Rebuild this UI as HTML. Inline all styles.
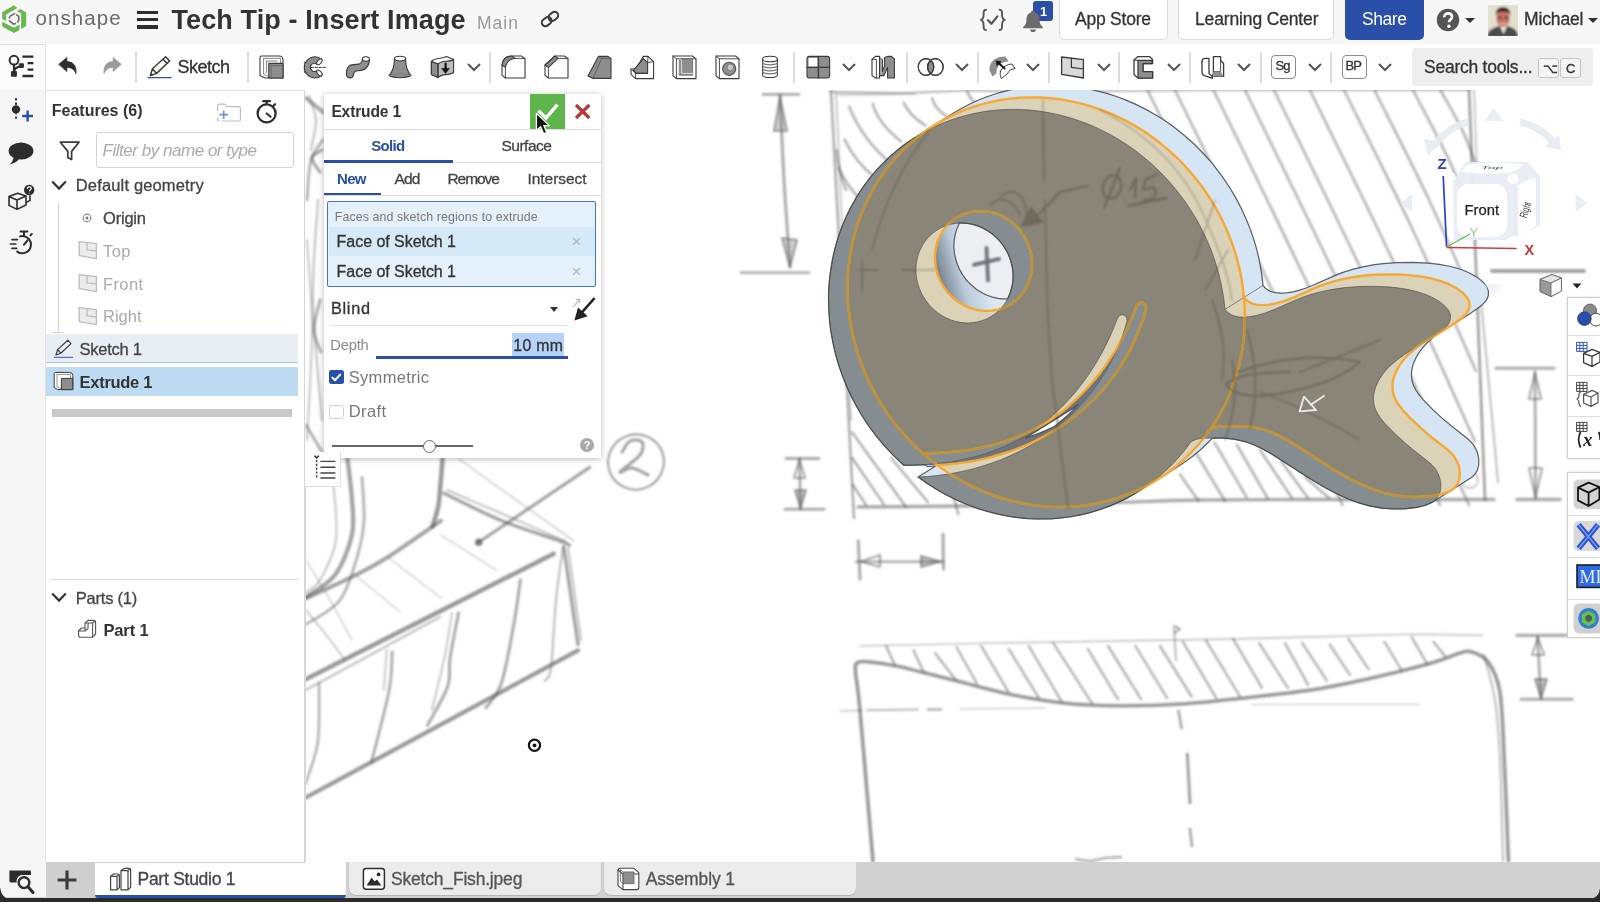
<!DOCTYPE html>
<html lang="en">
<head>
<meta charset="utf-8">
<title>Tech Tip - Insert Image</title>
<style>
*{box-sizing:border-box;margin:0;padding:0}
html,body{width:1600px;height:902px;overflow:hidden;background:#fff}
body{font-family:"Liberation Sans",sans-serif;color:#333;position:relative}
.abs{position:absolute}
.t{position:absolute;white-space:nowrap;line-height:1}
#topbar{left:0;top:0;width:1600px;height:44px;background:#f7f7f7}
#leftbar{left:0;top:44px;width:46px;height:818px;background:#f5f5f5;border-right:1px solid #e2e2e2}
#toolbar{left:46px;top:44px;width:1554px;height:46px;background:#fff}
#fpanel{left:46px;top:90px;width:259px;height:772px;background:#fff;border-right:1px solid #d6d6d6;border-top:1px solid #e4e4e4}
#canvas{left:305px;top:90px;width:1295px;height:772px;background:#fff;overflow:hidden}
#tabbar{left:0;top:862px;width:1600px;height:37px;background:#d1d1d1}
#bottomline{left:0;top:898.4px;width:1600px;height:3.6px;background:#2b2b2b}
.btn{position:absolute;top:0;height:40px;border:1px solid #d9d9d9;border-top:none;border-radius:0 0 5px 5px;background:#fff}
.sep{position:absolute;top:52px;width:2px;height:31px;background:#dcdcdc}
</style>
</head>
<body>
<!-- TOP BAR -->
<div id="topbar" class="abs"></div>
<!-- TOOLBAR -->
<div id="toolbar" class="abs"></div>
<!-- LEFT BAR -->
<div id="leftbar" class="abs"></div>
<!-- CANVAS -->
<div id="canvas" class="abs">
<svg width="1295" height="772" viewBox="305 90 1295 772" style="position:absolute;left:0;top:0">
<defs><filter id="pb" x="-5%" y="-5%" width="110%" height="110%"><feGaussianBlur stdDeviation="0.85"/></filter><filter id="pb2" x="-5%" y="-5%" width="110%" height="110%"><feGaussianBlur stdDeviation="1.1"/></filter></defs>
<g fill="none" stroke-linecap="round" stroke-linejoin="round" filter="url(#pb)"><path d="M831.0,91.0 L854.0,518.0" stroke="#505050" stroke-width="2.52"  stroke-opacity="0.48" />
<path d="M836.0,93.0 L851.0,420.0" stroke="#505050" stroke-width="1.82"  stroke-opacity="0.34" />
<path d="M830.0,92.0 C841.7,92.2 876.7,93.2 900.0,93.0 C923.3,92.8 946.7,90.7 970.0,90.5 C993.3,90.3 1001.7,92.1 1040.0,92.0 C1078.3,91.9 1128.3,90.3 1200.0,90.0 C1271.7,89.7 1425.0,90.0 1470.0,90.0" stroke="#505050" stroke-width="2.24"  stroke-opacity="0.44" />
<path d="M838.0,95.0 L915.0,94.0" stroke="#505050" stroke-width="1.68"  stroke-opacity="0.34" />
<path d="M858.0,507.0 C875.0,506.8 919.7,506.7 960.0,506.0 C1000.3,505.3 1060.0,504.0 1100.0,503.0 C1140.0,502.0 1158.3,500.6 1200.0,500.0 C1241.7,499.4 1301.0,499.6 1350.0,499.5 C1399.0,499.4 1470.0,499.5 1494.0,499.5" stroke="#505050" stroke-width="3.36"  stroke-opacity="0.48" />
<path d="M1469.0,88.0 L1485.0,500.0" stroke="#505050" stroke-width="2.80"  stroke-opacity="0.53" />
<path d="M1481.0,300.0 L1498.0,482.0" stroke="#505050" stroke-width="1.96"  stroke-opacity="0.39" />
<path d="M1474.0,88.0 L1478.0,200.0" stroke="#505050" stroke-width="1.82"  stroke-opacity="0.34" />
<path d="M872.8,103.8 Q877.5,122.8 901.0,141.5" stroke="#505050" stroke-width="2.52"  stroke-opacity="0.44" />
<path d="M903.8,102.9 Q909.9,116.0 925.5,125.5" stroke="#505050" stroke-width="2.52"  stroke-opacity="0.44" />
<path d="M932.1,98.2 Q934.4,108.0 946.2,116.1" stroke="#505050" stroke-width="2.52"  stroke-opacity="0.44" />
<path d="M967.0,90.7 Q969.7,99.2 976.4,103.8" stroke="#505050" stroke-width="2.52"  stroke-opacity="0.44" />
<path d="M849.2,106.7 Q862.5,139.5 889.7,162.3" stroke="#505050" stroke-width="2.52"  stroke-opacity="0.44" />
<path d="M844.5,139.6 Q855.9,162.4 874.6,177.3" stroke="#505050" stroke-width="2.52"  stroke-opacity="0.44" />
<path d="M838.8,167.9 Q847.4,186.9 859.6,198.0" stroke="#505050" stroke-width="2.52"  stroke-opacity="0.44" />
<path d="M836.5,150.0 Q838.8,174.0 846.0,190.0" stroke="#505050" stroke-width="2.52"  stroke-opacity="0.44" />
<path d="M1147.5,90.0 C1164.3,124.6 1215.5,228.3 1248.0,297.5 C1280.5,366.7 1326.8,470.4 1342.5,505.0" stroke="#505050" stroke-width="2.66"  stroke-opacity="0.41" />
<path d="M1175.0,90.0 C1191.8,124.6 1243.0,228.3 1275.5,297.5 C1308.0,366.7 1354.3,470.4 1370.0,505.0" stroke="#505050" stroke-width="2.66"  stroke-opacity="0.41" />
<path d="M1213.5,90.0 C1230.3,124.6 1281.5,228.3 1314.0,297.5 C1346.5,366.7 1392.8,470.4 1408.5,505.0" stroke="#505050" stroke-width="2.66"  stroke-opacity="0.41" />
<path d="M1245.0,90.0 C1261.8,124.6 1313.0,228.3 1345.5,297.5 C1378.0,366.7 1424.3,470.4 1440.0,505.0" stroke="#505050" stroke-width="2.66"  stroke-opacity="0.41" />
<path d="M1274.0,90.0 C1290.8,124.6 1342.0,228.3 1374.5,297.5 C1407.0,366.7 1453.3,470.4 1469.0,505.0" stroke="#505050" stroke-width="2.66"  stroke-opacity="0.41" />
<path d="M1309.8,90.0 C1324.1,119.3 1367.8,207.1 1395.3,265.6 C1422.9,324.2 1461.6,412.0 1474.9,441.3" stroke="#505050" stroke-width="2.66"  stroke-opacity="0.41" />
<path d="M1344.0,90.0 C1355.5,113.4 1391.0,183.6 1413.0,230.3 C1434.9,277.1 1465.4,347.3 1475.9,370.7" stroke="#505050" stroke-width="2.66"  stroke-opacity="0.41" />
<path d="M1374.4,90.0 C1383.4,108.2 1411.5,162.6 1428.6,199.0 C1445.7,235.3 1468.8,289.8 1476.8,307.9" stroke="#505050" stroke-width="2.66"  stroke-opacity="0.41" />
<path d="M1413.0,90.0 C1418.9,101.5 1437.7,136.1 1448.5,159.1 C1459.3,182.2 1473.1,216.8 1478.0,228.3" stroke="#505050" stroke-width="2.66"  stroke-opacity="0.41" />
<path d="M1440.4,90.0 C1444.1,96.8 1456.2,117.2 1462.6,130.9 C1469.0,144.5 1476.1,164.9 1478.8,171.7" stroke="#505050" stroke-width="2.66"  stroke-opacity="0.41" />
<path d="M852.2,432.4 L905.9,506.8" stroke="#505050" stroke-width="2.52"  stroke-opacity="0.44" />
<path d="M852.2,458.0 L883.9,504.4" stroke="#505050" stroke-width="2.52"  stroke-opacity="0.44" />
<path d="M891.2,458.0 L927.8,502.0" stroke="#505050" stroke-width="2.52"  stroke-opacity="0.44" />
<path d="M940.0,445.9 L958.3,514.1" stroke="#505050" stroke-width="2.52"  stroke-opacity="0.44" />
<path d="M853.0,485.0 L866.0,505.0" stroke="#505050" stroke-width="2.52"  stroke-opacity="0.44" />
<path d="M763.0,94.3 L799.0,94.3" stroke="#505050" stroke-width="2.80"  stroke-opacity="0.48" />
<path d="M780.0,95.0 C780.7,109.2 782.3,151.3 784.0,180.0 C785.7,208.7 789.0,252.5 790.0,267.0" stroke="#505050" stroke-width="3.08"  stroke-opacity="0.48" />
<path d="M741.0,272.7 L809.0,272.7" stroke="#505050" stroke-width="2.80"  stroke-opacity="0.44" />
<path d="M780,97 L774,131 L787,131Z" stroke="#505050" stroke-width="2.24"  stroke-opacity="0.48" fill="#777" fill-opacity="0.35"/>
<path d="M790,267 L782,238 L797,240Z" stroke="#505050" stroke-width="2.24"  stroke-opacity="0.48" fill="#777" fill-opacity="0.35"/>
<path d="M786.0,458.5 L819.0,458.5" stroke="#505050" stroke-width="3.08"  stroke-opacity="0.48" />
<path d="M785.0,509.3 L824.0,509.3" stroke="#505050" stroke-width="3.08"  stroke-opacity="0.48" />
<path d="M799.5,459.0 L800.5,509.0" stroke="#505050" stroke-width="2.80"  stroke-opacity="0.48" />
<path d="M799.5,460 L794,478 L805,478Z" stroke="#505050" stroke-width="2.24"  stroke-opacity="0.48" />
<path d="M800.5,508 L795,490 L806,490Z" stroke="#505050" stroke-width="2.24"  stroke-opacity="0.48" fill="#666" fill-opacity="0.4"/>
<path d="M858.3,541.0 L860.0,579.0" stroke="#505050" stroke-width="3.08"  stroke-opacity="0.48" />
<path d="M943.0,534.0 L943.5,569.0" stroke="#505050" stroke-width="3.08"  stroke-opacity="0.48" />
<path d="M856.0,561.7 L943.0,561.7" stroke="#505050" stroke-width="2.52"  stroke-opacity="0.48" />
<path d="M861,561.5 L880,555 L880,567Z" stroke="#505050" stroke-width="2.24"  stroke-opacity="0.48" />
<path d="M941,561.5 L921,556 L921,567Z" stroke="#505050" stroke-width="2.24"  stroke-opacity="0.48" fill="#666" fill-opacity="0.4"/>
<path d="M1492.0,271.0 L1584.0,271.0" stroke="#505050" stroke-width="4.20"  stroke-opacity="0.53" />
<path d="M1496.0,368.2 L1554.0,368.2" stroke="#505050" stroke-width="3.08"  stroke-opacity="0.48" />
<path d="M1517.0,499.5 L1560.0,499.5" stroke="#505050" stroke-width="3.64"  stroke-opacity="0.48" />
<path d="M1535.0,372.0 L1535.5,498.0" stroke="#505050" stroke-width="2.80"  stroke-opacity="0.48" />
<path d="M1535,373 L1529,399 L1541,399Z" stroke="#505050" stroke-width="2.24"  stroke-opacity="0.48" />
<path d="M1535.5,497 L1529,468 L1542,468Z" stroke="#505050" stroke-width="2.24"  stroke-opacity="0.48" />
<path d="M1517.0,635.4 L1566.0,635.4" stroke="#505050" stroke-width="3.08"  stroke-opacity="0.48" />
<path d="M1521.0,699.3 L1572.0,699.3" stroke="#505050" stroke-width="3.08"  stroke-opacity="0.48" />
<path d="M1537.5,637.0 L1541.0,698.0" stroke="#505050" stroke-width="2.80"  stroke-opacity="0.48" />
<path d="M1538,638 L1532,655 L1544,655Z" stroke="#505050" stroke-width="2.24"  stroke-opacity="0.48" />
<path d="M1541,698 L1535,679 L1547,679Z" stroke="#505050" stroke-width="2.24"  stroke-opacity="0.48" fill="#666" fill-opacity="0.4"/>
<circle cx="1470" cy="480" r="8" stroke="#4a4a4a" stroke-width="1.4" stroke-opacity="0.4"/>
<path d="M1180.0,474.5 L1198.6,501.0" stroke="#505050" stroke-width="2.66"  stroke-opacity="0.41" />
<path d="M1196.0,453.0 L1225.0,501.0" stroke="#505050" stroke-width="2.66"  stroke-opacity="0.41" />
<path d="M1214.6,442.6 L1246.5,497.0" stroke="#505050" stroke-width="2.66"  stroke-opacity="0.41" />
<path d="M1237.0,445.0 L1267.8,498.5" stroke="#505050" stroke-width="2.66"  stroke-opacity="0.41" />
<path d="M1260.0,450.0 L1292.0,498.0" stroke="#505050" stroke-width="2.66"  stroke-opacity="0.41" />
<path d="M1281.0,461.0 L1308.0,498.0" stroke="#505050" stroke-width="2.66"  stroke-opacity="0.41" />
<path d="M1305.0,477.0 L1329.0,498.0" stroke="#505050" stroke-width="2.66"  stroke-opacity="0.41" />
<path d="M873.0,861.0 C871.8,847.5 868.3,806.8 866.0,780.0 C863.7,753.2 860.8,718.0 859.0,700.0 C857.2,682.0 855.8,678.2 855.5,672.0 C855.2,665.8 855.1,664.2 857.5,662.5 C859.9,660.8 863.3,661.4 870.0,662.0 C876.7,662.6 883.4,663.1 897.6,666.2 C911.8,669.3 936.1,675.8 955.3,680.6 C974.5,685.4 993.8,691.1 1013.0,695.0 C1032.2,698.9 1051.3,701.9 1070.5,703.7 C1089.7,705.5 1108.8,705.7 1128.0,705.7 C1147.2,705.7 1164.2,705.2 1185.8,703.7 C1207.4,702.2 1236.0,698.9 1257.6,696.5 C1279.2,694.1 1296.1,692.4 1315.3,689.3 C1334.5,686.2 1353.8,682.0 1373.0,677.7 C1392.2,673.4 1416.1,667.4 1430.5,663.3 C1444.9,659.2 1452.7,655.1 1459.4,653.2 C1466.2,651.3 1466.2,650.3 1471.0,651.8 C1475.8,653.2 1483.2,655.4 1488.0,661.9 C1492.8,668.4 1497.0,675.4 1499.7,690.7 C1502.4,706.1 1502.5,725.6 1504.0,754.0 C1505.5,782.4 1507.7,843.2 1508.4,861.0" stroke="#505050" stroke-width="3.64"  stroke-opacity="0.58" />
<path d="M1484.0,655.0 C1485.8,662.5 1492.3,682.5 1495.0,700.0 C1497.7,717.5 1498.7,733.2 1500.0,760.0 C1501.3,786.8 1502.5,844.2 1503.0,861.0" stroke="#505050" stroke-width="1.96"  stroke-opacity="0.39" />
<path d="M860.0,646.0 C883.3,645.5 936.7,644.2 1000.0,643.0 C1063.3,641.8 1173.0,640.2 1240.0,638.8 C1307.0,637.4 1361.3,635.1 1401.7,634.5 C1442.1,633.9 1469.0,635.2 1482.4,635.4" stroke="#505050" stroke-width="1.68"  stroke-opacity="0.33" />
<path d="M886.1,646.0 L894.8,664.8" stroke="#505050" stroke-width="2.38"  stroke-opacity="0.44" />
<path d="M913.5,650.3 L923.6,672.0" stroke="#505050" stroke-width="2.38"  stroke-opacity="0.44" />
<path d="M935.1,653.2 L955.3,679.2" stroke="#505050" stroke-width="2.38"  stroke-opacity="0.44" />
<path d="M956.7,647.5 L976.9,683.5" stroke="#505050" stroke-width="2.38"  stroke-opacity="0.44" />
<path d="M981.2,646.0 L1008.6,692.1" stroke="#505050" stroke-width="2.38"  stroke-opacity="0.44" />
<path d="M1008.6,648.9 L1038.8,697.9" stroke="#505050" stroke-width="2.38"  stroke-opacity="0.44" />
<path d="M1028.8,646.0 L1061.9,702.2" stroke="#505050" stroke-width="2.38"  stroke-opacity="0.44" />
<path d="M1053.3,643.1 L1092.2,703.7" stroke="#505050" stroke-width="2.38"  stroke-opacity="0.44" />
<path d="M1087.8,648.9 L1118.1,699.3" stroke="#505050" stroke-width="2.38"  stroke-opacity="0.44" />
<path d="M1108.0,646.0 L1141.2,699.3" stroke="#505050" stroke-width="2.38"  stroke-opacity="0.44" />
<path d="M1135.4,646.0 L1167.1,697.9" stroke="#505050" stroke-width="2.38"  stroke-opacity="0.44" />
<path d="M1159.9,646.0 L1191.6,696.5" stroke="#505050" stroke-width="2.38"  stroke-opacity="0.44" />
<path d="M1182.9,641.7 L1216.1,697.9" stroke="#505050" stroke-width="2.38"  stroke-opacity="0.44" />
<path d="M1206.0,640.3 L1240.0,696.5" stroke="#505050" stroke-width="2.38"  stroke-opacity="0.44" />
<path d="M1233.1,638.8 L1262.0,687.8" stroke="#505050" stroke-width="2.38"  stroke-opacity="0.44" />
<path d="M1259.1,643.1 L1287.9,687.8" stroke="#505050" stroke-width="2.38"  stroke-opacity="0.44" />
<path d="M1285.0,643.1 L1308.1,684.9" stroke="#505050" stroke-width="2.38"  stroke-opacity="0.44" />
<path d="M1302.3,643.1 L1326.8,680.6" stroke="#505050" stroke-width="2.38"  stroke-opacity="0.44" />
<path d="M1329.7,644.6 L1349.9,674.8" stroke="#505050" stroke-width="2.38"  stroke-opacity="0.44" />
<path d="M1348.4,638.8 L1368.6,669.1" stroke="#505050" stroke-width="2.38"  stroke-opacity="0.44" />
<path d="M1384.4,641.7 L1401.7,670.5" stroke="#505050" stroke-width="2.38"  stroke-opacity="0.44" />
<path d="M1411.8,637.4 L1427.7,664.8" stroke="#505050" stroke-width="2.38"  stroke-opacity="0.44" />
<path d="M1433.4,641.7 L1445.0,656.1" stroke="#505050" stroke-width="2.38"  stroke-opacity="0.44" />
<path d="M1174.0,628.0 L1176.0,660.0" stroke="#505050" stroke-width="1.96"  stroke-opacity="0.39" />
<path d="M1174,626 L1180,629 L1174.5,633" stroke="#505050" stroke-width="1.96"  stroke-opacity="0.48" />
<path d="M1178.6,711.0 L1181.5,728.0" stroke="#505050" stroke-width="2.80"  stroke-opacity="0.48" />
<path d="M1187.3,754.0 L1190.0,803.0" stroke="#505050" stroke-width="3.08"  stroke-opacity="0.53" />
<path d="M1190.0,829.0 L1192.0,846.0" stroke="#505050" stroke-width="2.80"  stroke-opacity="0.48" />
<path d="M840.0,711.0 L862.0,710.5" stroke="#505050" stroke-width="1.68"  stroke-opacity="0.34" />
<path d="M867.0,710.3 L918.0,709.5" stroke="#505050" stroke-width="2.10"  stroke-opacity="0.39" />
<path d="M928.0,709.5 L941.0,709.5" stroke="#505050" stroke-width="2.52"  stroke-opacity="0.44" />
<path d="M960.0,709.0 L1045.0,708.0" stroke="#505050" stroke-width="1.40"  stroke-opacity="0.26" />
<path d="M1252.0,704.5 L1419.0,704.5" stroke="#505050" stroke-width="1.40"  stroke-opacity="0.26" />
<path d="M1076.0,859.0 C1078.3,859.3 1085.2,861.2 1090.0,861.0 C1094.8,860.8 1099.8,858.7 1105.0,858.0 C1110.2,857.3 1118.3,857.2 1121.0,857.0" stroke="#505050" stroke-width="2.52"  stroke-opacity="0.44" />
<path d="M442.6,458.7 C442.2,463.9 440.7,482.1 440.0,490.0 C439.3,497.9 439.5,500.2 438.3,506.3 C437.1,512.4 433.6,523.1 432.6,526.5" stroke="#505050" stroke-width="4.48"  stroke-opacity="0.58" />
<path d="M441.0,520.7 C431.9,526.9 400.9,548.9 386.5,558.0 C372.1,567.1 368.2,568.6 354.8,575.4 C341.4,582.1 314.0,594.6 305.8,598.5" stroke="#505050" stroke-width="3.92"  stroke-opacity="0.53" />
<path d="M444.0,493.3 C453.6,497.9 482.5,512.8 501.7,520.7 C520.9,528.6 548.1,536.8 559.4,540.9 C570.7,545.0 567.8,544.5 569.5,545.2" stroke="#505050" stroke-width="3.36"  stroke-opacity="0.53" />
<path d="M447.0,490.0 C456.7,494.2 485.3,506.5 505.0,515.0 C524.7,523.5 555.0,536.7 565.0,541.0" stroke="#505050" stroke-width="1.96"  stroke-opacity="0.34" />
<path d="M305.8,679.2 L553.6,553.8" stroke="#505050" stroke-width="4.48"  stroke-opacity="0.58" />
<path d="M305.8,690.0 L440.0,617.0" stroke="#505050" stroke-width="2.24"  stroke-opacity="0.34" />
<path d="M563.7,546.6 L578.0,644.6" stroke="#505050" stroke-width="3.36"  stroke-opacity="0.53" />
<path d="M568.0,548.0 L581.0,640.0" stroke="#505050" stroke-width="1.96"  stroke-opacity="0.39" />
<path d="M578.0,650.4 L305.0,798.0" stroke="#505050" stroke-width="4.20"  stroke-opacity="0.58" />
<path d="M520.5,579.8 C519.3,587.7 516.5,610.0 513.3,627.3 C510.1,644.5 505.9,669.9 501.4,683.3 C496.8,696.7 488.6,703.5 486.0,707.6" stroke="#505050" stroke-width="3.08"  stroke-opacity="0.48" />
<path d="M458.5,613.0 C457.1,620.7 451.7,646.8 449.9,659.0 C448.1,671.2 451.6,674.9 447.9,686.0 C444.2,697.1 430.9,718.8 427.5,725.4" stroke="#505050" stroke-width="3.08"  stroke-opacity="0.48" />
<path d="M452.0,613.0 C450.8,620.0 448.3,638.8 445.0,655.0 C441.7,671.2 434.2,700.8 432.0,710.0" stroke="#505050" stroke-width="1.82"  stroke-opacity="0.34" />
<path d="M392.2,651.8 C391.7,658.3 392.5,672.6 389.0,691.0 C385.5,709.4 374.3,750.5 371.4,762.4" stroke="#505050" stroke-width="2.80"  stroke-opacity="0.48" />
<path d="M386.7,650.0 L384.0,690.0" stroke="#505050" stroke-width="1.82"  stroke-opacity="0.34" />
<path d="M319.0,683.0 C318.8,692.8 320.1,725.0 317.8,742.0 C315.5,759.0 307.1,777.8 305.0,785.0" stroke="#505050" stroke-width="2.52"  stroke-opacity="0.44" />
<path d="M563.0,548.0 C561.8,556.7 558.0,580.0 556.0,600.0 C554.0,620.0 552.9,654.5 551.0,668.0 C549.1,681.5 545.8,678.7 544.7,680.8" stroke="#505050" stroke-width="2.10"  stroke-opacity="0.39" />
<path d="M478.7,542.3 L589.6,467.4" stroke="#505050" stroke-width="3.08"  stroke-opacity="0.53" />
<circle cx="478.7" cy="542.3" r="3.8" fill="#555" fill-opacity="0.7" stroke="none"/>
<path d="M458.5,458.7 L573.8,540.9" stroke="#505050" stroke-width="1.40"  stroke-opacity="0.30" />
<path d="M441.0,535.0 L496.0,570.0" stroke="#505050" stroke-width="1.40"  stroke-opacity="0.30" />
<path d="M389.0,558.0 L441.0,598.0" stroke="#505050" stroke-width="1.40"  stroke-opacity="0.27" />
<path d="M355.0,575.0 L400.0,612.0" stroke="#505050" stroke-width="1.40"  stroke-opacity="0.26" />
<path d="M347.5,458.7 C348.2,465.6 351.3,487.3 352.0,500.0 C352.7,512.7 354.7,522.5 351.9,535.0 C349.1,547.5 342.7,564.7 335.0,575.0 C327.3,585.3 310.7,593.3 305.8,597.0" stroke="#505050" stroke-width="4.20"  stroke-opacity="0.53" />
<path d="M362.0,477.5 C362.3,484.6 364.7,507.0 364.0,520.0 C363.3,533.0 361.6,542.0 357.6,555.3 C353.6,568.6 348.6,588.5 340.0,600.0 C331.4,611.5 311.5,620.3 305.8,624.4" stroke="#505050" stroke-width="2.80"  stroke-opacity="0.44" />
<path d="M333.0,480.0 C333.5,490.0 338.2,523.3 336.0,540.0 C333.8,556.7 325.0,571.3 320.0,580.0 C315.0,588.7 308.3,590.0 306.0,592.0" stroke="#505050" stroke-width="1.96"  stroke-opacity="0.34" />
<path d="M306.0,610.0 C310.0,615.0 323.5,631.7 330.0,640.0 C336.5,648.3 342.5,656.7 345.0,660.0" stroke="#505050" stroke-width="1.68"  stroke-opacity="0.34" />
<path d="M306.0,560.0 C310.0,566.7 322.3,586.7 330.0,600.0 C337.7,613.3 348.3,633.3 352.0,640.0" stroke="#505050" stroke-width="1.40"  stroke-opacity="0.30" />
<ellipse cx="636" cy="462" rx="28" ry="27.5" stroke="#4a4a4a" stroke-width="2" stroke-opacity="0.55" transform="rotate(-20 636 462)"/>
<path d="M622.0,452.0 C623.3,450.2 626.7,442.7 630.0,441.0 C633.3,439.3 640.3,439.7 642.0,442.0 C643.7,444.3 643.7,450.0 640.0,455.0 C636.3,460.0 621.3,469.8 620.0,472.0 C618.7,474.2 627.3,467.5 632.0,468.0 C636.7,468.5 645.3,473.8 648.0,475.0" stroke="#505050" stroke-width="3.08"  stroke-opacity="0.53" />
<path d="M306.0,98.0 L323.0,112.0" stroke="#505050" stroke-width="4.20"  stroke-opacity="0.48" />
<path d="M323.0,140.0 C321.0,143.3 313.7,150.0 311.0,160.0 C308.3,170.0 307.7,193.3 307.0,200.0" stroke="#505050" stroke-width="2.80"  stroke-opacity="0.44" />
<path d="M318.0,200.0 C317.2,216.7 312.3,263.3 313.0,300.0 C313.7,336.7 320.5,400.0 322.0,420.0" stroke="#505050" stroke-width="2.24"  stroke-opacity="0.34" />
<path d="M307.0,240.0 C307.8,255.0 312.0,296.7 312.0,330.0 C312.0,363.3 307.8,421.7 307.0,440.0" stroke="#505050" stroke-width="1.96"  stroke-opacity="0.34" />
<path d="M322.0,150.0 C320.3,151.3 312.3,154.3 312.0,158.0 C311.7,161.7 318.7,169.7 320.0,172.0" stroke="#505050" stroke-width="3.36"  stroke-opacity="0.48" />
<path d="M320.0,300.0 C319.0,305.0 313.8,321.3 314.0,330.0 C314.2,338.7 319.8,348.3 321.0,352.0" stroke="#505050" stroke-width="3.08"  stroke-opacity="0.44" />
<path d="M309.0,96.0 C310.2,100.0 315.7,111.0 316.0,120.0 C316.3,129.0 311.8,145.0 311.0,150.0" stroke="#505050" stroke-width="2.24"  stroke-opacity="0.34" />
<path d="M306.0,425.0 L322.0,452.0" stroke="#505050" stroke-width="3.08"  stroke-opacity="0.44" />
<path d="M1043.0,100.0 C1043.5,133.3 1041.8,232.0 1046.0,300.0 C1050.2,368.0 1064.3,473.3 1068.0,508.0" stroke="#505050" stroke-width="1.68"  stroke-opacity="0.48" />
<path d="M855.0,270.0 L875.0,270.0" stroke="#505050" stroke-width="1.96"  stroke-opacity="0.48" />
<path d="M905.0,270.0 L935.0,270.0" stroke="#505050" stroke-width="1.96"  stroke-opacity="0.48" />
<path d="M986.5,247.5 L988.0,280.7" stroke="#505050" stroke-width="3.64"  stroke-opacity="0.73" />
<path d="M973.5,264.8 L999.4,259.0" stroke="#505050" stroke-width="3.64"  stroke-opacity="0.73" />
<circle cx="1047" cy="303" r="1.8" fill="#333" fill-opacity="0.7" stroke="none"/></g>
<defs><linearGradient id="hg" gradientUnits="userSpaceOnUse" x1="936" y1="262" x2="978" y2="250"><stop offset="0" stop-color="#7b8690"/><stop offset="0.45" stop-color="#b9c9d8"/><stop offset="1" stop-color="#dbe8f3"/></linearGradient><clipPath id="clipNF"><path d="M0,0H1600V902H0Z M1225.0,309.4 1223.4,295.9 1221.4,285.2 1219.0,274.7 1216.8,266.8 1213.4,256.4 1210.6,248.8 1207.4,241.2 1202.8,231.3 1197.7,221.6 1193.5,214.5 1187.6,205.3 1182.9,198.5 1176.2,189.9 1170.9,183.6 1163.6,175.5 1155.8,167.8 1149.8,162.3 1141.4,155.3 1134.9,150.3 1126.0,144.1 1116.9,138.4 1109.8,134.4 1100.3,129.5 1090.5,125.1 1080.6,121.3 1073.0,118.7 1062.8,115.8 1055.1,113.9 1044.8,112.0 1037.0,110.8 1029.2,110.0 1018.8,109.4 1011.0,109.4 1000.7,109.8 993.0,110.4 982.8,111.8 972.7,113.8 965.2,115.6 955.4,118.5 945.8,121.9 936.4,125.8 929.6,129.1 920.7,134.0 914.2,137.9 905.8,143.6 897.7,149.8 890.0,156.4 884.4,161.7 877.4,169.1 870.8,176.8 866.1,182.9 860.2,191.3 856.1,197.8 851.1,206.8 847.6,213.7 843.4,223.2 839.7,232.9 837.2,240.4 835.1,247.9 832.7,258.2 831.3,266.0 829.8,276.4 828.9,287.0 828.5,295.0 828.7,308.4 829.4,319.1 830.6,329.8 833.0,343.2 835.4,353.7 839.2,366.8 842.9,377.1 847.0,387.2 852.9,399.6 858.1,409.2 863.8,418.6 871.5,429.9 878.2,438.5 887.1,448.9 894.7,456.8 903.7,465.3 912.6,465.2 922.9,464.8 940.9,463.2 951.2,461.8 958.8,460.4 973.9,457.0 983.8,454.1 991.1,451.7 1005.4,446.0 1012.3,442.8 1019.1,439.3 1025.7,435.5 1032.1,431.4 1042.5,424.0 1048.4,419.3 1054.2,414.2 1065.2,403.5 1075.5,392.0 1081.9,383.9 1087.9,375.6 1093.6,367.0 1098.9,358.1 1102.7,351.4 1107.3,342.2 1112.7,330.5 1117.3,318.7 1119.5,315.5 1123.0,314.5 1126.5,317.0 1127.1,320.7 1126.4,323.3 1123.2,333.6 1118.5,346.1 1115.3,353.4 1110.6,362.9 1106.8,369.8 1101.3,378.7 1096.9,385.2 1092.2,391.5 1087.3,397.6 1080.5,405.4 1075.1,411.0 1067.6,418.2 1061.7,423.4 1053.7,429.9 1041.0,438.9 1034.4,443.1 1025.3,448.3 1018.4,451.9 1009.0,456.3 1001.7,459.4 991.9,463.1 984.5,465.5 974.4,468.5 966.8,470.4 956.5,472.6 948.7,474.0 938.3,475.4 927.8,476.5 918.1,477.1 926.1,482.8 932.9,487.2 939.8,491.4 946.9,495.3 954.1,498.9 961.4,502.2 971.3,506.2 978.9,508.9 991.6,512.6 999.3,514.5 1007.0,516.0 1014.8,517.2 1022.6,518.1 1030.4,518.7 1038.2,519.0 1051.2,518.8 1058.9,518.2 1066.6,517.3 1074.2,516.1 1081.7,514.6 1089.2,512.8 1096.5,510.7 1108.6,506.5 1120.3,501.5 1131.5,495.7 1142.4,489.1 1148.6,484.8 1154.7,480.2 1160.6,475.3 1168.1,468.5 1173.5,463.1 1180.4,455.5 1185.2,449.6 1191.2,441.5 1195.0,439.8 1198.5,438.9 1202.1,438.4 1207.8,438.1 1223.7,438.2 1233.6,439.1 1243.0,441.1 1248.4,442.8 1253.7,444.8 1262.2,448.8 1272.2,454.4 1309.7,478.5 1319.7,484.6 1329.8,490.3 1340.1,495.4 1348.8,499.3 1357.7,502.6 1366.8,505.2 1377.8,507.6 1387.3,508.7 1396.9,509.1 1406.9,508.6 1417.1,507.3 1425.0,505.5 1428.7,504.1 1432.0,502.4 1434.9,500.3 1436.1,499.1 1438.2,496.4 1439.7,493.1 1440.6,489.5 1440.8,485.6 1440.5,481.6 1439.7,477.7 1438.3,473.9 1436.5,470.4 1434.1,467.2 1430.0,463.0 1413.2,449.8 1404.6,442.6 1394.8,433.6 1385.1,423.7 1380.1,417.5 1378.0,414.2 1376.2,410.9 1374.8,407.5 1373.9,403.9 1373.4,398.4 1373.7,394.7 1374.5,390.9 1375.6,387.2 1378.0,381.8 1379.9,378.4 1383.2,373.6 1385.7,370.5 1389.7,366.3 1397.1,359.9 1404.8,354.3 1429.2,339.4 1437.3,334.0 1443.7,329.2 1446.6,326.4 1447.8,325.0 1448.8,323.4 1450.2,320.0 1450.5,316.4 1450.3,314.6 1449.8,312.9 1448.1,309.7 1444.2,305.4 1441.3,302.9 1438.1,300.6 1431.2,296.8 1423.9,293.8 1414.5,291.0 1405.2,289.0 1395.7,287.6 1384.4,286.7 1371.0,286.3 1357.5,286.6 1344.0,287.7 1330.7,289.7 1319.3,292.1 1310.0,294.7 1300.9,297.9 1293.7,300.9 1274.3,309.5 1265.3,312.9 1256.2,315.6 1248.7,316.8 1243.0,317.2 1239.2,317.0 1233.7,315.8 1230.4,314.2 1227.3,312.0ZM991.0,316.6 986.0,319.2 982.5,320.5 977.1,322.0 973.4,322.6 967.7,323.0 963.9,322.8 960.1,322.4 954.4,321.1 950.7,319.9 945.3,317.5 941.9,315.6 937.0,312.3 932.5,308.3 929.7,305.5 926.0,300.8 923.8,297.4 921.8,293.9 919.4,288.5 918.1,284.7 916.7,278.9 916.0,273.0 915.9,269.1 916.1,265.2 917.0,259.5 918.5,253.9 919.9,250.3 922.4,245.3 924.5,242.1 928.0,237.7 930.6,235.0 933.4,232.6 938.0,229.4 943.0,226.8 946.5,225.5 951.9,224.0 955.6,223.4 959.4,223.1 965.1,223.2 968.9,223.6 974.6,224.9 978.3,226.1 983.7,228.5 988.8,231.4 992.0,233.7 996.5,237.7 999.3,240.5 1003.0,245.2 1005.2,248.6 1008.1,253.9 1009.6,257.5 1010.9,261.3 1012.3,267.1 1013.0,273.0 1013.1,276.9 1012.9,280.8 1012.0,286.5 1010.5,292.1 1009.1,295.7 1006.6,300.7 1004.5,303.9 1001.0,308.3 998.4,311.0 995.6,313.4Z" clip-rule="evenodd"/></clipPath><clipPath id="clipF"><path d="M1225.0,309.4 1223.4,295.9 1221.4,285.2 1219.0,274.7 1216.8,266.8 1213.4,256.4 1210.6,248.8 1207.4,241.2 1202.8,231.3 1197.7,221.6 1193.5,214.5 1187.6,205.3 1182.9,198.5 1176.2,189.9 1170.9,183.6 1163.6,175.5 1155.8,167.8 1149.8,162.3 1141.4,155.3 1134.9,150.3 1126.0,144.1 1116.9,138.4 1109.8,134.4 1100.3,129.5 1090.5,125.1 1080.6,121.3 1073.0,118.7 1062.8,115.8 1055.1,113.9 1044.8,112.0 1037.0,110.8 1029.2,110.0 1018.8,109.4 1011.0,109.4 1000.7,109.8 993.0,110.4 982.8,111.8 972.7,113.8 965.2,115.6 955.4,118.5 945.8,121.9 936.4,125.8 929.6,129.1 920.7,134.0 914.2,137.9 905.8,143.6 897.7,149.8 890.0,156.4 884.4,161.7 877.4,169.1 870.8,176.8 866.1,182.9 860.2,191.3 856.1,197.8 851.1,206.8 847.6,213.7 843.4,223.2 839.7,232.9 837.2,240.4 835.1,247.9 832.7,258.2 831.3,266.0 829.8,276.4 828.9,287.0 828.5,295.0 828.7,308.4 829.4,319.1 830.6,329.8 833.0,343.2 835.4,353.7 839.2,366.8 842.9,377.1 847.0,387.2 852.9,399.6 858.1,409.2 863.8,418.6 871.5,429.9 878.2,438.5 887.1,448.9 894.7,456.8 903.7,465.3 912.6,465.2 922.9,464.8 940.9,463.2 951.2,461.8 958.8,460.4 973.9,457.0 983.8,454.1 991.1,451.7 1005.4,446.0 1012.3,442.8 1019.1,439.3 1025.7,435.5 1032.1,431.4 1042.5,424.0 1048.4,419.3 1054.2,414.2 1065.2,403.5 1075.5,392.0 1081.9,383.9 1087.9,375.6 1093.6,367.0 1098.9,358.1 1102.7,351.4 1107.3,342.2 1112.7,330.5 1117.3,318.7 1119.5,315.5 1123.0,314.5 1126.5,317.0 1127.1,320.7 1126.4,323.3 1123.2,333.6 1118.5,346.1 1115.3,353.4 1110.6,362.9 1106.8,369.8 1101.3,378.7 1096.9,385.2 1092.2,391.5 1087.3,397.6 1080.5,405.4 1075.1,411.0 1067.6,418.2 1061.7,423.4 1053.7,429.9 1041.0,438.9 1034.4,443.1 1025.3,448.3 1018.4,451.9 1009.0,456.3 1001.7,459.4 991.9,463.1 984.5,465.5 974.4,468.5 966.8,470.4 956.5,472.6 948.7,474.0 938.3,475.4 927.8,476.5 918.1,477.1 926.1,482.8 932.9,487.2 939.8,491.4 946.9,495.3 954.1,498.9 961.4,502.2 971.3,506.2 978.9,508.9 991.6,512.6 999.3,514.5 1007.0,516.0 1014.8,517.2 1022.6,518.1 1030.4,518.7 1038.2,519.0 1051.2,518.8 1058.9,518.2 1066.6,517.3 1074.2,516.1 1081.7,514.6 1089.2,512.8 1096.5,510.7 1108.6,506.5 1120.3,501.5 1131.5,495.7 1142.4,489.1 1148.6,484.8 1154.7,480.2 1160.6,475.3 1168.1,468.5 1173.5,463.1 1180.4,455.5 1185.2,449.6 1191.2,441.5 1195.0,439.8 1198.5,438.9 1202.1,438.4 1207.8,438.1 1223.7,438.2 1233.6,439.1 1243.0,441.1 1248.4,442.8 1253.7,444.8 1262.2,448.8 1272.2,454.4 1309.7,478.5 1319.7,484.6 1329.8,490.3 1340.1,495.4 1348.8,499.3 1357.7,502.6 1366.8,505.2 1377.8,507.6 1387.3,508.7 1396.9,509.1 1406.9,508.6 1417.1,507.3 1425.0,505.5 1428.7,504.1 1432.0,502.4 1434.9,500.3 1436.1,499.1 1438.2,496.4 1439.7,493.1 1440.6,489.5 1440.8,485.6 1440.5,481.6 1439.7,477.7 1438.3,473.9 1436.5,470.4 1434.1,467.2 1430.0,463.0 1413.2,449.8 1404.6,442.6 1394.8,433.6 1385.1,423.7 1380.1,417.5 1378.0,414.2 1376.2,410.9 1374.8,407.5 1373.9,403.9 1373.4,398.4 1373.7,394.7 1374.5,390.9 1375.6,387.2 1378.0,381.8 1379.9,378.4 1383.2,373.6 1385.7,370.5 1389.7,366.3 1397.1,359.9 1404.8,354.3 1429.2,339.4 1437.3,334.0 1443.7,329.2 1446.6,326.4 1447.8,325.0 1448.8,323.4 1450.2,320.0 1450.5,316.4 1450.3,314.6 1449.8,312.9 1448.1,309.7 1444.2,305.4 1441.3,302.9 1438.1,300.6 1431.2,296.8 1423.9,293.8 1414.5,291.0 1405.2,289.0 1395.7,287.6 1384.4,286.7 1371.0,286.3 1357.5,286.6 1344.0,287.7 1330.7,289.7 1319.3,292.1 1310.0,294.7 1300.9,297.9 1293.7,300.9 1274.3,309.5 1265.3,312.9 1256.2,315.6 1248.7,316.8 1243.0,317.2 1239.2,317.0 1233.7,315.8 1230.4,314.2 1227.3,312.0ZM991.0,316.6 986.0,319.2 982.5,320.5 977.1,322.0 973.4,322.6 967.7,323.0 963.9,322.8 960.1,322.4 954.4,321.1 950.7,319.9 945.3,317.5 941.9,315.6 937.0,312.3 932.5,308.3 929.7,305.5 926.0,300.8 923.8,297.4 921.8,293.9 919.4,288.5 918.1,284.7 916.7,278.9 916.0,273.0 915.9,269.1 916.1,265.2 917.0,259.5 918.5,253.9 919.9,250.3 922.4,245.3 924.5,242.1 928.0,237.7 930.6,235.0 933.4,232.6 938.0,229.4 943.0,226.8 946.5,225.5 951.9,224.0 955.6,223.4 959.4,223.1 965.1,223.2 968.9,223.6 974.6,224.9 978.3,226.1 983.7,228.5 988.8,231.4 992.0,233.7 996.5,237.7 999.3,240.5 1003.0,245.2 1005.2,248.6 1008.1,253.9 1009.6,257.5 1010.9,261.3 1012.3,267.1 1013.0,273.0 1013.1,276.9 1012.9,280.8 1012.0,286.5 1010.5,292.1 1009.1,295.7 1006.6,300.7 1004.5,303.9 1001.0,308.3 998.4,311.0 995.6,313.4Z" clip-rule="evenodd"/></clipPath></defs>
<g id="fish">
<path d="M1007.6,298.9 1010.5,292.1 1012.0,286.5 1012.9,280.8 1013.0,273.0 1012.3,267.1 1010.3,259.4 1008.1,253.9 1004.2,246.9 1000.6,242.0 996.5,237.7 992.0,233.7 985.4,229.4 978.3,226.1 972.7,224.4 967.0,223.4 963.2,223.1 959.4,223.1 956.5,229.9 955.0,235.5 954.3,239.3 954.0,243.1 954.0,249.0 954.7,254.9 956.7,262.6 959.8,269.9 962.8,275.1 966.4,280.0 971.9,285.7 976.6,289.4 983.3,293.5 990.6,296.5 994.3,297.6 998.1,298.4 1001.9,298.8Z" fill="#d9dee6" fill-opacity="0.5"/>
<path d="M924.6,131.8 933.2,125.9 914.2,137.9ZM1480.2,306.4 1484.6,302.4 1486.8,299.4 1488.2,296.0 1488.5,292.4 1487.8,288.9 1486.1,285.7 1483.6,282.7 1480.8,280.1 1476.1,276.6 1470.9,273.7 1465.5,271.2 1458.1,268.6 1450.7,266.5 1443.2,265.0 1435.6,263.8 1428.1,263.1 1412.8,262.4 1397.4,262.6 1383.9,263.5 1370.6,265.3 1357.3,268.1 1344.4,271.9 1333.5,276.1 1308.7,287.0 1301.5,289.5 1296.0,291.1 1290.5,292.3 1286.7,292.8 1282.9,293.1 1279.1,293.1 1273.5,292.3 1270.0,291.1 1268.4,290.2 1265.3,288.0 1263.0,285.4 1262.1,277.2 1260.9,269.2 1259.4,261.2 1257.7,253.3 1254.8,242.8 1252.3,235.0 1249.5,227.3 1246.5,219.7 1240.8,207.3 1232.9,192.8 1224.1,179.0 1215.9,168.0 1205.3,155.5 1193.8,143.8 1187.8,138.3 1181.5,133.0 1175.1,128.0 1168.5,123.2 1161.8,118.6 1154.9,114.4 1143.1,107.9 1135.9,104.4 1128.5,101.1 1121.1,98.2 1113.5,95.5 1100.8,91.8 1090.5,89.4 1080.2,87.5 1067.2,86.0 1056.8,85.4 1043.8,85.5 1033.5,86.2 1020.8,87.8 1010.7,89.8 998.3,92.9 986.2,97.0 976.8,100.8 967.6,105.1 958.7,110.0 954.3,112.6 933.2,125.9 944.1,119.5 955.4,113.8 967.2,109.0 979.3,104.9 991.7,101.8 1004.3,99.4 1017.1,98.0 1030.0,97.4 1043.0,97.7 1056.0,98.8 1069.0,100.9 1081.8,103.8 1094.5,107.5 1107.0,112.1 1119.3,117.5 1131.2,123.7 1142.8,130.6 1153.9,138.3 1164.6,146.7 1172.8,153.9 1182.6,163.5 1189.9,171.6 1198.6,182.2 1206.6,193.3 1213.9,204.8 1221.8,219.3 1227.5,231.7 1232.4,244.4 1236.6,257.4 1239.9,270.6 1242.4,283.9 1244.0,297.4 1246.3,300.0 1247.8,301.2 1249.4,302.2 1252.7,303.8 1258.2,305.0 1263.9,305.1 1271.5,304.3 1278.9,302.6 1284.3,300.9 1291.5,298.3 1312.7,288.9 1321.7,285.2 1332.7,281.6 1344.0,278.8 1355.4,276.7 1366.9,275.3 1378.4,274.6 1391.9,274.4 1405.3,274.8 1416.6,275.8 1426.0,277.3 1435.4,279.5 1444.7,282.5 1451.9,285.7 1458.7,289.7 1463.2,293.4 1467.1,297.7 1468.8,300.9 1469.5,304.4 1469.5,306.2 1468.6,309.7 1466.8,313.0 1465.6,314.4 1462.7,317.2 1456.3,322.0 1449.8,326.4 1470.4,313.3ZM1478.6,465.5 1478.8,459.7 1477.7,453.7 1475.4,448.1 1473.3,444.8 1470.8,441.8 1466.6,437.7 1451.2,425.8 1441.2,417.3 1432.8,409.6 1425.8,402.6 1420.5,396.6 1416.0,390.2 1413.4,385.2 1411.9,379.9 1411.4,376.2 1411.5,372.5 1412.1,368.8 1413.0,365.0 1414.3,361.4 1416.0,357.8 1420.0,351.1 1425.0,345.1 1432.1,338.4 1436.8,334.6 1449.8,326.4 1437.9,333.6 1430.8,338.4 1420.1,344.9 1411.6,351.6 1407.3,355.7 1404.7,358.5 1401.0,363.1 1398.9,366.4 1396.1,371.6 1394.6,375.2 1393.1,380.8 1392.5,384.5 1392.4,388.2 1392.9,391.9 1394.4,397.2 1397.0,402.2 1400.3,407.1 1405.4,413.1 1415.2,422.9 1425.0,431.8 1432.2,437.8 1449.0,451.0 1453.1,455.2 1455.5,458.4 1457.3,461.9 1459.2,467.7 1459.8,473.6 1459.6,477.5 1458.7,481.1 1457.2,484.4 1455.1,487.1 1453.9,488.3 1451.0,490.4 1470.0,478.4 1472.9,476.3 1475.2,473.8 1476.2,472.4 1477.7,469.1ZM1196.7,453.0 1204.3,446.2 1212.5,438.1 1203.6,438.3 1194.3,449.2 1189.0,454.7 1183.4,460.0 1177.7,465.0 1171.7,469.7 1165.6,474.2 1159.2,478.5 1182.5,463.7 1188.7,459.3ZM935.6,466.0 918.1,477.1 933.1,476.0 949.7,473.8 937.1,465.1 925.8,465.3 927.7,466.7ZM1159.2,478.5 1148.8,484.6 1140.2,490.5ZM1449.4,491.3 1444.0,493.5 1439.1,494.7 1438.2,496.4 1436.1,499.1 1434.9,500.3 1432.0,502.4 1451.0,490.4Z" fill="#d6e5f3" fill-rule="evenodd"/>
<path d="M949.7,473.8 964.2,471.0 976.9,467.8 989.5,463.9 1001.7,459.4 1013.7,454.2 1025.3,448.3 1036.6,441.7 1046.9,434.9 1035.1,441.1 1023.2,446.4 1010.9,451.1 995.9,455.8 983.2,459.0 967.7,462.0 952.1,464.0 937.1,465.1ZM1120.5,341.2 1124.0,331.1 1127.1,320.7 1126.5,317.0 1123.0,314.5 1119.5,315.5 1117.3,318.7 1113.6,328.2 1109.5,337.6 1105.1,346.8 1101.4,353.6 1096.3,362.6 1092.2,369.1 1086.4,377.7 1081.9,383.9 1072.1,395.9 1061.6,407.2 1050.4,417.6 1044.5,422.5 1038.1,427.3 1049.0,420.8 1055.3,416.6 1061.5,412.0 1067.4,407.3 1073.2,402.2 1084.2,391.5 1094.5,380.0 1103.9,367.8 1108.4,361.4 1114.0,352.8 1119.2,343.9ZM1203.6,438.3 1196.7,439.3 1193.3,440.5 1191.2,441.5 1186.8,447.6 1182.0,453.6 1177.0,459.3 1171.8,464.9 1166.3,470.2 1160.6,475.3 1154.7,480.2 1148.8,484.6 1157.1,479.8 1165.6,474.2 1173.7,468.2 1179.6,463.3 1185.3,458.2 1192.5,451.1 1197.7,445.4ZM924.6,131.8 934.1,126.9 945.8,121.9 957.9,117.7 970.2,114.3 982.8,111.8 993.0,110.4 1005.8,109.5 1018.8,109.4 1029.2,110.0 1042.2,111.5 1055.1,113.9 1067.9,117.2 1080.6,121.3 1093.0,126.2 1105.1,131.9 1116.9,138.4 1128.3,145.6 1139.3,153.6 1149.8,162.3 1157.8,169.7 1165.4,177.5 1174.5,187.7 1182.9,198.5 1189.1,207.5 1196.3,219.2 1202.8,231.3 1208.5,243.7 1213.4,256.4 1217.6,269.4 1220.9,282.6 1223.4,295.9 1225.0,309.4 1227.3,312.0 1228.8,313.2 1230.4,314.2 1233.7,315.8 1237.3,316.7 1243.0,317.2 1248.7,316.8 1256.2,315.6 1261.7,314.1 1268.9,311.7 1276.0,308.8 1299.1,298.6 1306.4,295.9 1315.6,293.1 1326.9,290.4 1338.3,288.4 1349.8,287.2 1363.3,286.4 1374.8,286.4 1388.2,287.0 1397.6,287.8 1407.0,289.3 1416.4,291.5 1423.9,293.8 1431.2,296.8 1438.1,300.6 1442.8,304.1 1446.9,308.2 1449.1,311.2 1449.8,312.9 1450.5,316.4 1450.5,318.2 1449.6,321.7 1447.8,325.0 1446.6,326.4 1443.7,329.2 1437.9,333.6 1451.4,325.3 1461.2,318.4 1465.6,314.4 1467.8,311.4 1468.6,309.7 1469.5,306.2 1469.3,302.6 1468.8,300.9 1467.1,297.7 1464.6,294.7 1460.3,290.9 1457.1,288.6 1451.9,285.7 1446.5,283.2 1441.0,281.2 1435.4,279.5 1427.9,277.7 1422.3,276.6 1414.7,275.6 1407.2,275.0 1397.6,274.5 1382.3,274.4 1366.9,275.3 1353.5,277.0 1340.2,279.7 1330.9,282.2 1323.5,284.6 1314.5,288.1 1289.7,299.0 1280.7,302.1 1273.4,303.9 1265.8,305.0 1260.1,305.1 1254.5,304.3 1251.0,303.1 1249.4,302.2 1246.3,300.0 1244.0,297.4 1243.1,289.2 1241.9,281.2 1240.4,273.2 1238.7,265.3 1235.8,254.8 1233.3,247.0 1230.5,239.3 1227.5,231.7 1221.8,219.3 1213.9,204.8 1205.1,191.0 1196.9,180.0 1186.3,167.5 1174.8,155.8 1168.8,150.3 1162.5,145.0 1156.1,140.0 1149.5,135.2 1142.8,130.6 1135.9,126.4 1124.1,119.9 1116.9,116.4 1109.5,113.1 1102.1,110.2 1094.5,107.5 1084.4,104.5 1074.1,101.9 1061.2,99.5 1050.8,98.3 1040.4,97.5 1030.0,97.4 1017.1,98.0 1006.8,99.1 994.2,101.2 984.2,103.6 974.4,106.5 964.8,109.9 953.1,114.9 944.1,119.5 933.2,125.9ZM1420.1,344.9 1408.0,352.3 1398.6,358.8 1391.1,365.0 1387.0,369.1 1384.4,372.0 1380.9,376.7 1378.9,380.1 1377.1,383.6 1375.6,387.2 1374.5,390.9 1373.7,394.7 1373.4,398.4 1373.6,402.1 1374.8,407.5 1377.0,412.6 1379.0,415.9 1381.3,419.1 1386.4,425.1 1394.8,433.6 1403.2,441.3 1413.2,449.8 1428.6,461.7 1432.8,465.8 1435.3,468.8 1438.3,473.9 1439.7,477.7 1440.5,481.6 1440.8,485.6 1440.6,489.5 1440.2,491.4 1439.1,494.7 1445.9,492.8 1451.0,490.4 1453.9,488.3 1455.1,487.1 1457.2,484.4 1458.0,482.8 1459.2,479.4 1459.6,477.5 1459.8,473.6 1459.2,467.7 1457.3,461.9 1454.3,456.8 1450.5,452.4 1446.0,448.5 1433.7,439.0 1423.6,430.6 1413.8,421.6 1404.1,411.7 1399.1,405.5 1396.0,400.6 1393.8,395.5 1392.6,390.1 1392.5,384.5 1393.5,378.9 1395.3,373.4 1397.0,369.8 1398.9,366.4 1402.2,361.6 1407.3,355.7 1413.1,350.4ZM947.4,225.2 943.0,226.8 938.0,229.4 933.4,232.6 930.6,235.0 928.0,237.7 924.5,242.1 922.4,245.3 919.9,250.3 918.5,253.9 917.0,259.5 916.1,265.2 915.9,269.1 916.0,273.0 916.7,278.9 918.1,284.7 919.4,288.5 921.8,293.9 923.8,297.4 927.2,302.4 931.1,306.9 933.9,309.7 938.6,313.4 943.6,316.6 947.1,318.4 950.7,319.9 956.3,321.6 962.0,322.6 965.8,322.9 971.5,322.8 975.2,322.3 978.9,321.6 984.3,319.9 989.4,317.5 992.6,315.6 997.0,312.2 1000.6,308.8 996.1,310.0 992.4,310.6 986.7,311.0 982.9,310.8 979.1,310.4 973.4,309.1 969.7,307.9 964.3,305.5 960.9,303.6 956.0,300.3 951.5,296.3 948.7,293.5 945.0,288.8 942.8,285.4 940.8,281.9 938.4,276.5 936.6,270.8 935.2,263.0 935.0,255.1 935.6,249.4 936.4,245.6 937.5,241.9 939.6,236.6 941.4,233.3 943.5,230.1Z" fill="#dbd3b8" fill-rule="evenodd"/>
<path d="M925.7,465.3 941.6,464.8 957.3,463.4 972.9,461.1 988.3,457.8 1003.5,453.5 1018.3,448.3 1032.7,442.2 1046.9,434.9 1057.7,426.7 1069.5,416.5 1080.5,405.4 1090.6,393.5 1095.3,387.3 1099.8,380.9 1106.8,369.8 1110.6,362.9 1114.2,355.8 1119.9,342.6 1112.6,355.0 1105.4,365.7 1096.1,378.0 1087.7,387.8 1077.0,398.8 1067.4,407.3 1057.4,415.1 1046.8,422.2 1038.1,427.3 1032.1,431.4 1025.7,435.5 1016.8,440.5 1005.4,446.0 991.1,451.7 976.4,456.3 968.9,458.2 958.8,460.4 951.2,461.8 940.9,463.2 922.9,464.8 925.0,464.7ZM1025.2,438.3 1069.2,410.7 1078.6,404.2 1068.0,414.9 1062.3,420.0 1054.7,426.3 1041.3,432.4 1034.1,435.2Z" fill="#6d747b" fill-rule="evenodd"/>
<path d="M994.3,297.6 988.7,295.9 985.1,294.4 981.6,292.6 976.6,289.4 971.9,285.7 969.1,282.9 966.4,280.0 962.8,275.1 959.8,269.9 956.7,262.6 954.7,254.9 954.0,249.0 954.0,243.1 954.3,239.3 955.0,235.5 956.5,229.9 959.4,223.1 953.8,223.7 947.4,225.2 944.6,228.6 942.4,231.6 940.5,234.9 938.9,238.3 937.5,241.9 936.4,245.6 935.6,249.4 935.0,255.1 935.2,263.0 935.7,266.9 937.1,272.7 939.9,280.1 943.8,287.1 947.4,292.0 950.1,294.9 952.9,297.7 957.6,301.4 962.6,304.6 966.1,306.4 971.6,308.5 977.2,310.0 982.9,310.8 988.6,310.9 994.2,310.3 1000.6,308.8 1004.5,303.9 1007.6,298.9 1003.8,298.9 1000.0,298.6Z" fill="url(#hg)" fill-rule="evenodd"/>
<path d="M924.6,131.8 914.2,137.9 903.7,145.1 893.8,153.1 884.4,161.7 875.7,171.0 869.2,178.8 863.1,187.0 856.1,197.8 849.9,209.1 845.4,218.4 840.6,230.5 837.2,240.4 834.5,250.5 831.7,263.4 830.1,273.8 828.9,287.0 828.5,297.7 828.8,311.1 829.6,321.8 831.5,335.2 834.1,348.5 837.6,361.6 841.0,372.0 845.9,384.7 850.4,394.7 856.7,406.8 863.8,418.6 869.9,427.6 876.5,436.4 885.3,446.9 894.7,456.8 903.7,465.3 912.6,465.2 922.9,464.8 933.2,464.1 943.5,462.9 953.7,461.3 961.4,459.9 971.4,457.6 978.9,455.6 988.7,452.5 995.9,449.9 1003.0,447.1 1010.0,443.9 1016.8,440.5 1023.5,436.8 1030.0,432.8 1038.1,427.3 1026.7,433.0 1012.5,438.8 1000.3,442.9 985.4,446.8 970.2,449.8 954.8,451.8 939.4,453.0 922.7,453.3 913.7,444.8 904.3,434.9 895.5,424.4 887.3,413.4 879.9,401.9 874.4,392.4 868.2,380.2 862.8,367.6 860.0,360.0 857.4,352.2 855.1,344.4 853.1,336.5 851.4,328.5 849.6,317.8 848.6,309.8 847.9,301.8 847.6,293.7 847.5,285.7 847.9,275.0 848.5,267.1 849.5,259.2 850.7,251.4 852.3,243.6 854.1,235.9 856.2,228.4 858.7,220.9 861.4,213.6 864.4,206.4 867.7,199.4 871.3,192.5 875.1,185.8 879.2,179.3 883.6,173.0 888.2,166.8 893.0,160.9 898.1,155.2 903.4,149.7 910.9,142.7 916.7,137.8ZM1119.5,343.7 1114.2,355.8 1110.6,362.9 1106.8,369.8 1099.8,380.9 1095.3,387.3 1090.6,393.5 1080.5,405.4 1069.5,416.5 1057.7,426.7 1046.9,434.9 1057.8,428.4 1066.4,422.5 1076.7,414.7 1084.7,408.0 1094.1,399.0 1101.2,391.5 1109.6,381.5 1115.9,373.2 1123.1,362.3 1129.6,350.9 1135.4,339.0 1140.4,326.7 1143.8,316.5 1146.1,308.7 1145.5,305.0 1142.0,302.5 1138.5,303.5 1136.3,306.7 1132.6,316.2 1128.5,325.6ZM949.7,473.8 933.1,476.0 918.1,477.1 930.6,485.8 937.5,490.0 944.6,494.0 956.5,500.0 963.9,503.3 971.3,506.2 983.9,510.5 991.6,512.6 999.3,514.5 1007.0,516.0 1014.8,517.2 1022.6,518.1 1030.4,518.7 1038.2,519.0 1046.0,519.0 1056.3,518.4 1064.0,517.7 1071.6,516.6 1079.2,515.2 1086.7,513.5 1094.1,511.5 1101.4,509.1 1108.6,506.5 1115.6,503.6 1122.5,500.4 1129.3,496.9 1135.9,493.1 1142.4,489.1 1148.8,484.6 1137.0,490.6 1125.2,495.4 1113.1,499.5 1100.7,502.6 1088.1,505.0 1075.3,506.4 1062.4,507.0 1049.4,506.7 1036.4,505.6 1023.4,503.5 1010.6,500.6 997.9,496.9 985.4,492.3 975.5,488.0 963.6,482.0 956.5,478.0ZM1203.6,438.3 1219.7,438.1 1225.7,438.3 1231.7,438.8 1237.4,439.8 1243.0,441.1 1248.4,442.8 1253.7,444.8 1262.2,448.8 1272.2,454.4 1309.7,478.5 1319.7,484.6 1329.8,490.3 1340.1,495.4 1350.6,500.0 1359.5,503.1 1368.6,505.7 1379.7,507.9 1391.1,508.9 1402.9,508.9 1415.1,507.7 1423.1,506.0 1426.9,504.8 1430.4,503.3 1433.5,501.4 1436.1,499.1 1438.2,496.4 1439.1,494.7 1432.0,495.9 1421.9,496.9 1414.0,497.0 1406.3,496.7 1398.7,495.9 1389.4,494.1 1382.1,492.2 1373.1,489.3 1366.1,486.5 1357.4,482.6 1350.5,479.2 1342.0,474.5 1325.4,464.5 1296.1,445.4 1284.6,438.6 1277.9,435.1 1272.7,432.8 1265.6,430.2 1260.1,428.6 1252.6,427.1 1242.7,426.2 1224.9,426.2 1217.5,426.9 1214.0,427.8 1210.2,429.5ZM1420.1,344.9 1430.8,338.4 1437.9,333.6 1427.0,340.3ZM947.4,225.2 953.8,223.7 957.5,223.2 961.3,223.0 967.0,223.4 970.8,224.0 974.6,224.9 978.3,226.1 981.9,227.6 987.1,230.4 992.0,233.7 997.9,239.1 1000.6,242.0 1004.2,246.9 1006.2,250.3 1008.9,255.7 1010.9,261.3 1011.9,265.2 1012.8,271.0 1013.1,274.9 1012.9,280.8 1012.4,284.6 1011.6,288.4 1009.9,293.9 1008.4,297.4 1005.6,302.4 1003.4,305.4 1000.6,308.8 1005.0,307.2 1010.0,304.6 1014.6,301.4 1017.4,299.0 1021.3,294.9 1024.6,290.4 1027.4,285.4 1028.9,281.9 1030.6,276.4 1031.4,272.6 1031.9,268.8 1032.1,262.9 1031.8,259.0 1030.9,253.2 1029.9,249.3 1027.9,243.7 1025.2,238.3 1023.2,234.9 1019.6,230.0 1016.9,227.1 1012.6,223.0 1009.4,220.6 1004.4,217.4 1000.9,215.6 995.4,213.5 991.7,212.4 986.0,211.4 982.2,211.1 976.5,211.2 972.8,211.7 969.1,212.4 963.7,214.1 958.6,216.5 953.9,219.5 951.0,221.8Z" fill="#868d90" fill-rule="evenodd"/>
<path d="M1224.1,301.2 1222.9,293.2 1221.4,285.2 1219.0,274.7 1216.8,266.8 1213.4,256.4 1210.6,248.8 1207.4,241.2 1202.8,231.3 1197.7,221.6 1193.5,214.5 1187.6,205.3 1182.9,198.5 1176.2,189.9 1170.9,183.6 1163.6,175.5 1157.8,169.7 1149.8,162.3 1143.5,157.0 1134.9,150.3 1128.3,145.6 1121.5,141.2 1114.6,137.0 1105.1,131.9 1097.9,128.4 1088.0,124.1 1080.6,121.3 1070.5,117.9 1062.8,115.8 1055.1,113.9 1044.8,112.0 1037.0,110.8 1029.2,110.0 1018.8,109.4 1011.0,109.4 1003.2,109.6 995.5,110.2 987.8,111.1 980.2,112.3 972.7,113.8 962.8,116.2 955.4,118.5 945.8,121.9 936.4,125.8 927.3,130.3 924.6,131.8 920.7,134.7 914.7,139.4 909.0,144.4 903.4,149.7 896.4,157.1 889.8,164.8 885.1,170.9 879.2,179.3 875.1,185.8 870.1,194.8 866.6,201.7 862.4,211.2 859.6,218.5 856.2,228.4 854.1,235.9 852.3,243.6 850.3,254.0 848.8,264.4 848.0,272.4 847.5,285.7 847.7,296.4 848.6,309.8 850.5,323.2 853.1,336.5 855.8,347.0 860.0,360.0 863.9,370.2 869.4,382.7 875.7,394.8 882.8,406.6 888.9,415.6 895.5,424.4 904.3,434.9 913.7,444.8 922.7,453.3 939.4,453.0 954.8,451.8 970.2,449.8 985.4,446.8 1000.3,442.9 1012.5,438.8 1026.7,433.0 1038.1,427.3 1044.5,422.5 1050.4,417.6 1056.1,412.5 1063.4,405.4 1073.8,394.0 1078.7,388.0 1084.9,379.8 1093.6,367.0 1097.6,360.3 1102.7,351.4 1106.2,344.5 1110.6,335.2 1117.3,318.7 1119.5,315.5 1123.0,314.5 1126.5,317.0 1127.1,320.7 1124.0,331.1 1119.9,342.6 1124.1,334.8 1128.5,325.6 1132.6,316.2 1136.3,306.7 1138.5,303.5 1142.0,302.5 1145.5,305.0 1146.1,308.7 1143.0,319.1 1139.5,329.2 1136.5,336.6 1133.2,343.8 1129.6,350.9 1124.4,360.0 1120.3,366.7 1115.9,373.2 1106.3,385.6 1095.9,397.2 1090.4,402.7 1082.7,409.7 1072.7,417.9 1060.0,426.9 1046.9,434.9 1038.8,440.4 1032.1,444.4 1025.3,448.3 1016.1,453.1 1001.7,459.4 994.4,462.2 984.5,465.5 976.9,467.8 966.8,470.4 949.7,473.8 961.2,480.7 970.7,485.7 980.4,490.2 990.3,494.2 997.9,496.9 1005.5,499.2 1013.1,501.3 1020.9,503.0 1028.6,504.4 1036.4,505.6 1044.2,506.4 1052.0,506.9 1059.8,507.0 1067.6,506.9 1075.3,506.4 1083.0,505.7 1090.6,504.6 1098.2,503.2 1110.6,500.2 1120.4,497.1 1129.9,493.6 1139.3,489.5 1148.8,484.6 1154.7,480.2 1160.6,475.3 1166.3,470.2 1171.8,464.9 1177.0,459.3 1182.0,453.6 1186.8,447.6 1191.2,441.5 1193.3,440.5 1196.7,439.3 1200.3,438.6 1203.6,438.3 1210.2,429.5 1214.0,427.8 1219.3,426.6 1224.9,426.2 1234.7,426.1 1246.7,426.4 1256.4,427.8 1265.6,430.2 1270.9,432.1 1276.1,434.3 1284.6,438.6 1292.8,443.3 1327.0,465.5 1343.7,475.5 1352.2,480.1 1360.8,484.2 1369.6,488.0 1376.7,490.6 1385.8,493.2 1393.1,494.9 1400.6,496.1 1408.2,496.8 1415.9,497.1 1423.9,496.8 1432.0,495.9 1439.1,494.7 1440.2,491.4 1440.6,489.5 1440.8,483.7 1440.2,479.7 1439.1,475.8 1436.5,470.4 1434.1,467.2 1430.0,463.0 1413.2,449.8 1404.6,442.6 1394.8,433.6 1385.1,423.7 1380.1,417.5 1378.0,414.2 1376.2,410.9 1374.8,407.5 1373.9,403.9 1373.4,398.4 1373.7,394.7 1374.5,390.9 1375.6,387.2 1378.0,381.8 1379.9,378.4 1383.2,373.6 1385.7,370.5 1389.7,366.3 1397.1,359.9 1404.8,354.3 1420.1,344.9 1428.6,339.3 1437.9,333.6 1443.7,329.2 1446.6,326.4 1447.8,325.0 1448.8,323.4 1450.2,320.0 1450.5,316.4 1450.3,314.6 1449.8,312.9 1448.1,309.7 1444.2,305.4 1439.7,301.7 1432.9,297.7 1425.7,294.5 1416.4,291.5 1407.0,289.3 1397.6,287.8 1386.3,286.8 1374.8,286.4 1359.4,286.6 1345.9,287.5 1332.6,289.3 1321.2,291.7 1310.0,294.7 1300.9,297.9 1293.7,300.9 1274.3,309.5 1265.3,312.9 1256.2,315.6 1248.7,316.8 1243.0,317.2 1239.2,317.0 1233.7,315.8 1230.4,314.2 1227.3,312.0 1225.0,309.4ZM989.4,317.5 984.3,319.9 978.9,321.6 973.4,322.6 967.7,323.0 962.0,322.6 956.3,321.6 950.7,319.9 943.6,316.6 938.6,313.4 933.9,309.7 929.7,305.5 926.0,300.8 922.8,295.7 919.4,288.5 917.6,282.8 916.4,276.9 916.0,273.0 916.0,267.1 916.6,261.4 917.9,255.7 919.9,250.3 921.5,246.9 923.4,243.6 926.7,239.1 930.6,235.0 934.9,231.5 938.0,229.4 941.3,227.6 947.4,225.2 952.4,220.6 957.0,217.4 962.0,214.8 965.5,213.5 969.1,212.4 972.8,211.7 976.5,211.2 982.2,211.1 986.0,211.4 991.7,212.4 997.3,214.1 1002.7,216.5 1007.8,219.4 1011.0,221.7 1015.5,225.7 1019.6,230.0 1022.0,233.2 1025.2,238.3 1027.1,241.9 1029.3,247.4 1030.4,251.2 1031.6,257.1 1032.0,261.0 1032.0,266.9 1031.7,270.7 1031.0,274.5 1029.5,280.1 1028.1,283.7 1025.6,288.7 1023.5,291.9 1021.3,294.9 1018.8,297.7 1016.0,300.2 1013.1,302.5 1010.0,304.6 1006.7,306.4 1000.6,308.8 995.6,313.4 992.6,315.6Z" fill="#898579" fill-rule="evenodd"/>
<path d="M861.6,189.2 856.1,197.8 849.9,209.1 845.4,218.4 841.5,228.0 838.0,237.9 835.1,247.9 832.7,258.2 830.5,271.2 829.0,284.4 828.5,295.0 828.7,308.4 829.4,319.1 830.6,329.8 833.0,343.2 835.4,353.7 838.4,364.2 842.9,377.1 847.0,387.2 851.6,397.1 856.7,406.8 862.3,416.2 868.3,425.4 876.5,436.4 883.5,444.8 892.8,454.9 903.7,465.3 915.2,465.2 925.0,464.7 927.7,466.7 935.6,466.0 918.1,477.1 928.4,484.3 937.5,490.0 946.9,495.3 956.5,500.0 963.9,503.3 971.3,506.2 978.9,508.9 986.5,511.2 996.7,513.9 1004.4,515.5 1012.2,516.9 1020.0,517.9 1027.8,518.6 1035.6,519.0 1043.4,519.0 1051.2,518.8 1058.9,518.2 1069.1,517.0 1076.7,515.7 1084.2,514.1 1091.6,512.2 1099.0,509.9 1110.9,505.6 1122.5,500.4 1129.3,496.9 1135.9,493.1 1178.2,466.5 1186.6,460.8 1192.7,456.2 1200.5,449.7 1206.1,444.5 1212.5,438.1 1223.7,438.2 1233.6,439.1 1243.0,441.1 1248.4,442.8 1253.7,444.8 1262.2,448.8 1270.6,453.4 1278.7,458.4 1301.4,473.3 1313.0,480.6 1324.7,487.5 1336.6,493.8 1348.8,499.3 1359.5,503.1 1370.4,506.1 1381.6,508.1 1393.0,509.0 1404.9,508.8 1417.1,507.3 1423.1,506.0 1426.9,504.8 1432.0,502.4 1471.5,477.4 1474.1,475.1 1475.2,473.8 1477.0,470.8 1477.7,469.1 1478.6,465.5 1478.8,459.7 1478.2,455.7 1477.1,451.8 1474.5,446.4 1472.1,443.2 1468.0,439.0 1451.2,425.8 1442.6,418.6 1432.8,409.6 1423.1,399.7 1418.1,393.5 1416.0,390.2 1414.2,386.9 1412.8,383.5 1411.9,379.9 1411.4,374.4 1411.7,370.7 1412.5,366.9 1413.6,363.2 1416.0,357.8 1417.9,354.4 1421.2,349.6 1423.7,346.5 1427.7,342.3 1432.1,338.4 1436.8,334.6 1468.8,314.4 1475.3,310.0 1481.7,305.2 1484.6,302.4 1485.8,301.0 1486.8,299.4 1488.2,296.0 1488.5,292.4 1488.3,290.6 1487.1,287.2 1486.1,285.7 1483.6,282.7 1480.8,280.1 1477.7,277.7 1470.9,273.7 1467.4,272.0 1461.9,269.8 1456.3,268.0 1450.7,266.5 1439.4,264.4 1428.1,263.1 1412.8,262.4 1397.4,262.6 1385.9,263.3 1374.4,264.7 1363.0,266.8 1353.6,269.1 1344.4,271.9 1337.1,274.6 1314.0,284.8 1306.9,287.7 1299.7,290.1 1294.2,291.6 1286.7,292.8 1281.0,293.2 1275.3,292.7 1271.7,291.8 1270.0,291.1 1266.8,289.2 1265.3,288.0 1263.0,285.4 1262.1,277.2 1260.9,269.2 1259.4,261.2 1257.7,253.3 1255.6,245.4 1253.2,237.6 1250.5,229.9 1247.5,222.2 1242.0,209.7 1235.7,197.6 1230.1,188.2 1222.5,176.8 1212.5,163.7 1203.4,153.5 1193.8,143.8 1183.6,134.7 1172.9,126.3 1161.8,118.6 1154.9,114.4 1147.8,110.4 1135.9,104.4 1126.0,100.1 1118.6,97.3 1108.5,93.9 1100.8,91.8 1093.1,89.9 1082.8,88.0 1075.0,86.8 1067.2,86.0 1056.8,85.4 1049.0,85.4 1038.7,85.8 1031.0,86.4 1023.3,87.4 1013.2,89.2 1003.2,91.6 995.9,93.7 986.2,97.0 979.1,99.8 969.9,104.0 960.9,108.7 954.3,112.6 914.2,137.9 905.8,143.6 899.7,148.2 893.8,153.1 888.1,158.2 880.9,165.3 875.7,171.0 870.8,176.8 866.1,182.9ZM1041.3,432.4 1025.2,438.3 1069.2,410.7 1078.6,404.2 1068.0,414.9 1062.3,420.0 1054.7,426.3ZM998.1,298.4 992.4,297.1 986.9,295.2 981.6,292.6 976.6,289.4 970.5,284.3 966.4,280.0 962.8,275.1 959.8,269.9 957.4,264.5 955.6,258.8 954.4,252.9 953.9,247.1 954.1,241.2 955.0,235.5 956.5,229.9 959.4,223.1 963.2,223.1 967.0,223.4 970.8,224.0 974.6,224.9 978.3,226.1 981.9,227.6 987.1,230.4 992.0,233.7 997.9,239.1 1003.0,245.2 1007.2,252.1 1008.9,255.7 1010.9,261.3 1012.6,269.1 1013.0,273.0 1013.0,278.9 1012.7,282.7 1012.0,286.5 1010.5,292.1 1007.6,298.9 1001.9,298.8Z" fill="none" stroke="#3f4246" stroke-width="1.2" stroke-opacity="0.85"/>
<path d="M1225.0,309.4 1223.4,295.9 1221.4,285.2 1219.0,274.7 1216.8,266.8 1213.4,256.4 1210.6,248.8 1207.4,241.2 1202.8,231.3 1197.7,221.6 1193.5,214.5 1187.6,205.3 1182.9,198.5 1176.2,189.9 1170.9,183.6 1163.6,175.5 1155.8,167.8 1149.8,162.3 1141.4,155.3 1134.9,150.3 1126.0,144.1 1116.9,138.4 1109.8,134.4 1100.3,129.5 1090.5,125.1 1080.6,121.3 1073.0,118.7 1062.8,115.8 1055.1,113.9 1044.8,112.0 1037.0,110.8 1029.2,110.0 1018.8,109.4 1011.0,109.4 1000.7,109.8 993.0,110.4 982.8,111.8 972.7,113.8 965.2,115.6 955.4,118.5 945.8,121.9 936.4,125.8 929.6,129.1 920.7,134.0 914.2,137.9 905.8,143.6 897.7,149.8 890.0,156.4 884.4,161.7 877.4,169.1 870.8,176.8 866.1,182.9 860.2,191.3 856.1,197.8 851.1,206.8 847.6,213.7 843.4,223.2 839.7,232.9 837.2,240.4 835.1,247.9 832.7,258.2 831.3,266.0 829.8,276.4 828.9,287.0 828.5,295.0 828.7,308.4 829.4,319.1 830.6,329.8 833.0,343.2 835.4,353.7 839.2,366.8 842.9,377.1 847.0,387.2 852.9,399.6 858.1,409.2 863.8,418.6 871.5,429.9 878.2,438.5 887.1,448.9 894.7,456.8 903.7,465.3 912.6,465.2 922.9,464.8 940.9,463.2 951.2,461.8 958.8,460.4 973.9,457.0 983.8,454.1 991.1,451.7 1005.4,446.0 1012.3,442.8 1019.1,439.3 1025.7,435.5 1032.1,431.4 1042.5,424.0 1048.4,419.3 1054.2,414.2 1065.2,403.5 1075.5,392.0 1081.9,383.9 1087.9,375.6 1093.6,367.0 1098.9,358.1 1102.7,351.4 1107.3,342.2 1112.7,330.5 1117.3,318.7 1119.5,315.5 1123.0,314.5 1126.5,317.0 1127.1,320.7 1126.4,323.3 1123.2,333.6 1118.5,346.1 1115.3,353.4 1110.6,362.9 1106.8,369.8 1101.3,378.7 1096.9,385.2 1092.2,391.5 1087.3,397.6 1080.5,405.4 1075.1,411.0 1067.6,418.2 1061.7,423.4 1053.7,429.9 1041.0,438.9 1034.4,443.1 1025.3,448.3 1018.4,451.9 1009.0,456.3 1001.7,459.4 991.9,463.1 984.5,465.5 974.4,468.5 966.8,470.4 956.5,472.6 948.7,474.0 938.3,475.4 927.8,476.5 918.1,477.1 926.1,482.8 932.9,487.2 939.8,491.4 946.9,495.3 954.1,498.9 961.4,502.2 971.3,506.2 978.9,508.9 991.6,512.6 999.3,514.5 1007.0,516.0 1014.8,517.2 1022.6,518.1 1030.4,518.7 1038.2,519.0 1051.2,518.8 1058.9,518.2 1066.6,517.3 1074.2,516.1 1081.7,514.6 1089.2,512.8 1096.5,510.7 1108.6,506.5 1120.3,501.5 1131.5,495.7 1142.4,489.1 1148.6,484.8 1154.7,480.2 1160.6,475.3 1168.1,468.5 1173.5,463.1 1180.4,455.5 1185.2,449.6 1191.2,441.5 1195.0,439.8 1198.5,438.9 1202.1,438.4 1207.8,438.1 1223.7,438.2 1233.6,439.1 1243.0,441.1 1248.4,442.8 1253.7,444.8 1262.2,448.8 1272.2,454.4 1309.7,478.5 1319.7,484.6 1329.8,490.3 1340.1,495.4 1348.8,499.3 1357.7,502.6 1366.8,505.2 1377.8,507.6 1387.3,508.7 1396.9,509.1 1406.9,508.6 1417.1,507.3 1425.0,505.5 1428.7,504.1 1432.0,502.4 1434.9,500.3 1436.1,499.1 1438.2,496.4 1439.7,493.1 1440.6,489.5 1440.8,485.6 1440.5,481.6 1439.7,477.7 1438.3,473.9 1436.5,470.4 1434.1,467.2 1430.0,463.0 1413.2,449.8 1404.6,442.6 1394.8,433.6 1385.1,423.7 1380.1,417.5 1378.0,414.2 1376.2,410.9 1374.8,407.5 1373.9,403.9 1373.4,398.4 1373.7,394.7 1374.5,390.9 1375.6,387.2 1378.0,381.8 1379.9,378.4 1383.2,373.6 1385.7,370.5 1389.7,366.3 1397.1,359.9 1404.8,354.3 1429.2,339.4 1437.3,334.0 1443.7,329.2 1446.6,326.4 1447.8,325.0 1448.8,323.4 1450.2,320.0 1450.5,316.4 1450.3,314.6 1449.8,312.9 1448.1,309.7 1444.2,305.4 1441.3,302.9 1438.1,300.6 1431.2,296.8 1423.9,293.8 1414.5,291.0 1405.2,289.0 1395.7,287.6 1384.4,286.7 1371.0,286.3 1357.5,286.6 1344.0,287.7 1330.7,289.7 1319.3,292.1 1310.0,294.7 1300.9,297.9 1293.7,300.9 1274.3,309.5 1265.3,312.9 1256.2,315.6 1248.7,316.8 1243.0,317.2 1239.2,317.0 1233.7,315.8 1230.4,314.2 1227.3,312.0ZM991.0,316.6 986.0,319.2 982.5,320.5 977.1,322.0 973.4,322.6 967.7,323.0 963.9,322.8 960.1,322.4 954.4,321.1 950.7,319.9 945.3,317.5 941.9,315.6 937.0,312.3 932.5,308.3 929.7,305.5 926.0,300.8 923.8,297.4 921.8,293.9 919.4,288.5 918.1,284.7 916.7,278.9 916.0,273.0 915.9,269.1 916.1,265.2 917.0,259.5 918.5,253.9 919.9,250.3 922.4,245.3 924.5,242.1 928.0,237.7 930.6,235.0 933.4,232.6 938.0,229.4 943.0,226.8 946.5,225.5 951.9,224.0 955.6,223.4 959.4,223.1 965.1,223.2 968.9,223.6 974.6,224.9 978.3,226.1 983.7,228.5 988.8,231.4 992.0,233.7 996.5,237.7 999.3,240.5 1003.0,245.2 1005.2,248.6 1008.1,253.9 1009.6,257.5 1010.9,261.3 1012.3,267.1 1013.0,273.0 1013.1,276.9 1012.9,280.8 1012.0,286.5 1010.5,292.1 1009.1,295.7 1006.6,300.7 1004.5,303.9 1001.0,308.3 998.4,311.0 995.6,313.4Z" fill="none" stroke="#4c483e" stroke-width="0.9" stroke-opacity="0.75"/>
<path d="M1191.2,441.5 1229.2,417.5M1225.0,309.4 1263.0,285.4" fill="none" stroke="#4a4d52" stroke-width="0.9" stroke-opacity="0.7" clip-path="url(#clipNF)"/>
</g>
<g id="fishlines" fill="none" stroke="#f8a830" stroke-width="2.4" stroke-linecap="round" stroke-linejoin="round">
<path d="M1161.4,477.1 1152.7,482.4 1146.1,486.1 1137.0,490.6 1127.6,494.5 1118.0,497.9 1110.6,500.2 1100.7,502.6 1090.6,504.6 1080.4,506.0 1070.2,506.8 1062.4,507.0 1052.0,506.9 1041.6,506.1 1031.2,504.9 1023.4,503.5 1013.1,501.3 1002.9,498.5 995.3,496.0 985.4,492.3 975.5,488.0 965.9,483.3 956.5,478.0 949.6,473.8 940.7,467.7 934.1,462.8 925.7,455.9 917.6,448.6 909.8,440.9 902.5,432.8 895.5,424.4 888.9,415.6 884.3,408.9 879.9,401.9 874.4,392.4 869.4,382.7 864.9,372.7 861.9,365.1 858.2,354.8 855.1,344.4 852.5,333.8 850.5,323.2 849.3,315.2 848.1,304.4 847.6,293.7 847.5,285.7 847.9,275.0 848.8,264.4 850.3,254.0 852.3,243.6 854.8,233.4 857.8,223.4 860.5,216.0 864.4,206.4 868.9,197.1 872.5,190.3 877.8,181.4 882.1,175.0 888.2,166.8 894.7,159.0 901.6,151.5 909.0,144.4 916.7,137.8 924.8,131.6 931.0,127.3 939.7,122.0 946.3,118.3 955.4,113.8 964.8,109.9 974.4,106.5 984.2,103.6 991.7,101.8 1001.8,99.8 1012.0,98.4 1019.7,97.8 1030.0,97.4 1040.4,97.5 1050.8,98.3 1061.2,99.5 1069.0,100.9 1079.3,103.1 1089.5,105.9 1099.6,109.3 1107.0,112.1 1116.9,116.4 1124.1,119.9 1133.6,125.0 1142.8,130.6 1151.7,136.7 1160.4,143.3 1168.8,150.3 1176.8,157.7 1182.6,163.5 1189.9,171.6 1195.2,177.9 1201.9,186.5 1208.1,195.5 1213.9,204.8 1219.3,214.4 1223.0,221.7 1227.5,231.7 1231.5,241.9 1235.0,252.2 1237.3,260.0 1239.9,270.6 1241.9,281.2 1243.1,289.2 1244.3,300.0 1244.8,310.7 1244.9,318.7 1244.5,329.4 1243.6,340.0 1242.1,350.4 1240.7,358.2 1238.3,368.5 1235.4,378.5 1231.9,388.4 1229.0,395.6 1224.7,405.0 1219.9,414.1 1214.6,423.0 1208.8,431.4 1202.6,439.6 1197.7,445.4 1190.8,452.9 1183.4,460.0 1175.7,466.6 1167.6,472.8Z"/><path d="M1242.9,295.6 1244.9,298.5 1246.3,300.0 1249.4,302.2 1252.7,303.8 1256.3,304.7 1260.1,305.1 1263.9,305.1 1269.6,304.6 1277.0,303.1 1286.1,300.3 1295.0,296.8 1312.7,288.9 1319.9,285.9 1327.2,283.3 1336.5,280.6 1347.8,278.0 1359.2,276.2 1370.7,275.0 1384.2,274.4 1397.6,274.5 1409.1,275.1 1420.4,276.4 1429.8,278.1 1439.1,280.6 1448.4,284.0 1455.4,287.6 1458.7,289.7 1461.8,292.1 1464.6,294.7 1467.1,297.7 1468.8,300.9 1469.3,302.6 1469.5,304.4 1469.2,308.0 1467.8,311.4 1466.8,313.0 1465.6,314.4 1462.7,317.2 1456.3,322.0 1448.2,327.4 1423.8,342.3 1416.1,347.9 1408.7,354.3 1404.7,358.5 1402.2,361.6 1398.9,366.4 1397.0,369.8 1394.6,375.2 1393.5,378.9 1392.7,382.7 1392.4,386.4 1392.9,391.9 1393.8,395.5 1395.2,398.9 1397.0,402.2 1399.1,405.5 1404.1,411.7 1411.0,418.8 1420.8,428.1 1432.2,437.8 1447.6,449.7 1451.8,453.8 1454.3,456.8 1457.3,461.9 1459.2,467.7 1459.8,473.6 1459.6,477.5 1459.2,479.4 1458.0,482.8 1457.2,484.4 1456.2,485.8 1453.9,488.3 1451.0,490.4 1447.7,492.1 1444.0,493.5 1440.1,494.5 1434.1,495.7 1427.9,496.4 1415.9,497.1 1404.4,496.6 1393.1,494.9 1383.9,492.8 1373.1,489.3 1362.6,485.0 1352.2,480.1 1342.0,474.5 1330.3,467.6 1299.3,447.4 1289.6,441.4 1277.9,435.1 1272.7,432.8 1267.4,430.8 1258.3,428.2 1250.7,426.8 1242.7,426.2 1232.7,426.1 1223.0,426.3 1217.5,426.9 1212.3,428.5 1207.9,431.0"/><path d="M922.7,453.3 931.6,453.2 941.9,452.8 959.9,451.2 970.2,449.8 977.8,448.4 992.9,445.0 1002.8,442.1 1010.1,439.7 1024.4,434.0 1031.3,430.8 1038.1,427.3 1044.7,423.5 1051.1,419.4 1061.5,412.0 1067.4,407.3 1073.2,402.2 1084.2,391.5 1094.5,380.0 1100.9,371.9 1106.9,363.6 1112.6,355.0 1117.9,346.1 1121.7,339.4 1126.3,330.2 1131.7,318.5 1136.3,306.7 1138.5,303.5 1142.0,302.5 1145.5,305.0 1146.1,308.7 1145.4,311.3 1142.2,321.6 1137.5,334.1 1134.3,341.4 1129.6,350.9 1125.8,357.8 1120.3,366.7 1115.9,373.2 1111.2,379.5 1106.3,385.6 1099.5,393.4 1094.1,399.0 1086.6,406.2 1080.7,411.4 1072.7,417.9 1060.0,426.9 1053.4,431.1 1044.3,436.3 1037.4,439.9 1028.0,444.3 1020.7,447.4 1010.9,451.1 1003.5,453.5 993.4,456.5 985.8,458.4 975.5,460.6 967.7,462.0 957.3,463.4 946.8,464.5 937.1,465.1"/><path d="M1011.6,303.6 1008.4,305.5 1003.3,307.9 997.9,309.6 994.2,310.3 990.5,310.8 984.8,310.9 981.0,310.6 975.3,309.6 969.7,307.9 966.1,306.4 962.6,304.6 957.6,301.4 952.9,297.7 950.1,294.9 947.4,292.0 943.8,287.1 941.8,283.7 939.1,278.3 937.7,274.6 936.1,268.8 935.2,263.0 934.9,259.1 935.0,255.1 935.6,249.4 936.9,243.7 938.1,240.1 939.6,236.6 942.4,231.6 944.6,228.6 948.2,224.3 951.0,221.8 955.4,218.4 958.6,216.5 963.7,214.1 969.1,212.4 972.8,211.7 976.5,211.2 982.2,211.1 986.0,211.4 991.7,212.4 995.4,213.5 1000.9,215.6 1004.4,217.4 1009.4,220.6 1012.6,223.0 1016.9,227.1 1019.6,230.0 1023.2,234.9 1025.2,238.3 1027.9,243.7 1029.9,249.3 1030.9,253.2 1031.8,259.0 1032.1,262.9 1031.9,268.8 1031.4,272.6 1030.6,276.4 1028.9,281.9 1027.4,285.4 1024.6,290.4 1022.4,293.4 1018.8,297.7 1014.6,301.4Z"/>
</g>
<g fill="none" stroke="#bd9238" stroke-width="2.5" stroke-linecap="round" stroke-linejoin="round" clip-path="url(#clipF)">
<path d="M1161.4,477.1 1152.7,482.4 1146.1,486.1 1137.0,490.6 1127.6,494.5 1118.0,497.9 1110.6,500.2 1100.7,502.6 1090.6,504.6 1080.4,506.0 1070.2,506.8 1062.4,507.0 1052.0,506.9 1041.6,506.1 1031.2,504.9 1023.4,503.5 1013.1,501.3 1002.9,498.5 995.3,496.0 985.4,492.3 975.5,488.0 965.9,483.3 956.5,478.0 949.6,473.8 940.7,467.7 934.1,462.8 925.7,455.9 917.6,448.6 909.8,440.9 902.5,432.8 895.5,424.4 888.9,415.6 884.3,408.9 879.9,401.9 874.4,392.4 869.4,382.7 864.9,372.7 861.9,365.1 858.2,354.8 855.1,344.4 852.5,333.8 850.5,323.2 849.3,315.2 848.1,304.4 847.6,293.7 847.5,285.7 847.9,275.0 848.8,264.4 850.3,254.0 852.3,243.6 854.8,233.4 857.8,223.4 860.5,216.0 864.4,206.4 868.9,197.1 872.5,190.3 877.8,181.4 882.1,175.0 888.2,166.8 894.7,159.0 901.6,151.5 909.0,144.4 916.7,137.8 924.8,131.6 931.0,127.3 939.7,122.0 946.3,118.3 955.4,113.8 964.8,109.9 974.4,106.5 984.2,103.6 991.7,101.8 1001.8,99.8 1012.0,98.4 1019.7,97.8 1030.0,97.4 1040.4,97.5 1050.8,98.3 1061.2,99.5 1069.0,100.9 1079.3,103.1 1089.5,105.9 1099.6,109.3 1107.0,112.1 1116.9,116.4 1124.1,119.9 1133.6,125.0 1142.8,130.6 1151.7,136.7 1160.4,143.3 1168.8,150.3 1176.8,157.7 1182.6,163.5 1189.9,171.6 1195.2,177.9 1201.9,186.5 1208.1,195.5 1213.9,204.8 1219.3,214.4 1223.0,221.7 1227.5,231.7 1231.5,241.9 1235.0,252.2 1237.3,260.0 1239.9,270.6 1241.9,281.2 1243.1,289.2 1244.3,300.0 1244.8,310.7 1244.9,318.7 1244.5,329.4 1243.6,340.0 1242.1,350.4 1240.7,358.2 1238.3,368.5 1235.4,378.5 1231.9,388.4 1229.0,395.6 1224.7,405.0 1219.9,414.1 1214.6,423.0 1208.8,431.4 1202.6,439.6 1197.7,445.4 1190.8,452.9 1183.4,460.0 1175.7,466.6 1167.6,472.8Z"/><path d="M1242.9,295.6 1244.9,298.5 1246.3,300.0 1249.4,302.2 1252.7,303.8 1256.3,304.7 1260.1,305.1 1263.9,305.1 1269.6,304.6 1277.0,303.1 1286.1,300.3 1295.0,296.8 1312.7,288.9 1319.9,285.9 1327.2,283.3 1336.5,280.6 1347.8,278.0 1359.2,276.2 1370.7,275.0 1384.2,274.4 1397.6,274.5 1409.1,275.1 1420.4,276.4 1429.8,278.1 1439.1,280.6 1448.4,284.0 1455.4,287.6 1458.7,289.7 1461.8,292.1 1464.6,294.7 1467.1,297.7 1468.8,300.9 1469.3,302.6 1469.5,304.4 1469.2,308.0 1467.8,311.4 1466.8,313.0 1465.6,314.4 1462.7,317.2 1456.3,322.0 1448.2,327.4 1423.8,342.3 1416.1,347.9 1408.7,354.3 1404.7,358.5 1402.2,361.6 1398.9,366.4 1397.0,369.8 1394.6,375.2 1393.5,378.9 1392.7,382.7 1392.4,386.4 1392.9,391.9 1393.8,395.5 1395.2,398.9 1397.0,402.2 1399.1,405.5 1404.1,411.7 1411.0,418.8 1420.8,428.1 1432.2,437.8 1447.6,449.7 1451.8,453.8 1454.3,456.8 1457.3,461.9 1459.2,467.7 1459.8,473.6 1459.6,477.5 1459.2,479.4 1458.0,482.8 1457.2,484.4 1456.2,485.8 1453.9,488.3 1451.0,490.4 1447.7,492.1 1444.0,493.5 1440.1,494.5 1434.1,495.7 1427.9,496.4 1415.9,497.1 1404.4,496.6 1393.1,494.9 1383.9,492.8 1373.1,489.3 1362.6,485.0 1352.2,480.1 1342.0,474.5 1330.3,467.6 1299.3,447.4 1289.6,441.4 1277.9,435.1 1272.7,432.8 1267.4,430.8 1258.3,428.2 1250.7,426.8 1242.7,426.2 1232.7,426.1 1223.0,426.3 1217.5,426.9 1212.3,428.5 1207.9,431.0"/><path d="M922.7,453.3 931.6,453.2 941.9,452.8 959.9,451.2 970.2,449.8 977.8,448.4 992.9,445.0 1002.8,442.1 1010.1,439.7 1024.4,434.0 1031.3,430.8 1038.1,427.3 1044.7,423.5 1051.1,419.4 1061.5,412.0 1067.4,407.3 1073.2,402.2 1084.2,391.5 1094.5,380.0 1100.9,371.9 1106.9,363.6 1112.6,355.0 1117.9,346.1 1121.7,339.4 1126.3,330.2 1131.7,318.5 1136.3,306.7 1138.5,303.5 1142.0,302.5 1145.5,305.0 1146.1,308.7 1145.4,311.3 1142.2,321.6 1137.5,334.1 1134.3,341.4 1129.6,350.9 1125.8,357.8 1120.3,366.7 1115.9,373.2 1111.2,379.5 1106.3,385.6 1099.5,393.4 1094.1,399.0 1086.6,406.2 1080.7,411.4 1072.7,417.9 1060.0,426.9 1053.4,431.1 1044.3,436.3 1037.4,439.9 1028.0,444.3 1020.7,447.4 1010.9,451.1 1003.5,453.5 993.4,456.5 985.8,458.4 975.5,460.6 967.7,462.0 957.3,463.4 946.8,464.5 937.1,465.1"/><path d="M1011.6,303.6 1008.4,305.5 1003.3,307.9 997.9,309.6 994.2,310.3 990.5,310.8 984.8,310.9 981.0,310.6 975.3,309.6 969.7,307.9 966.1,306.4 962.6,304.6 957.6,301.4 952.9,297.7 950.1,294.9 947.4,292.0 943.8,287.1 941.8,283.7 939.1,278.3 937.7,274.6 936.1,268.8 935.2,263.0 934.9,259.1 935.0,255.1 935.6,249.4 936.9,243.7 938.1,240.1 939.6,236.6 942.4,231.6 944.6,228.6 948.2,224.3 951.0,221.8 955.4,218.4 958.6,216.5 963.7,214.1 969.1,212.4 972.8,211.7 976.5,211.2 982.2,211.1 986.0,211.4 991.7,212.4 995.4,213.5 1000.9,215.6 1004.4,217.4 1009.4,220.6 1012.6,223.0 1016.9,227.1 1019.6,230.0 1023.2,234.9 1025.2,238.3 1027.9,243.7 1029.9,249.3 1030.9,253.2 1031.8,259.0 1032.1,262.9 1031.9,268.8 1031.4,272.6 1030.6,276.4 1028.9,281.9 1027.4,285.4 1024.6,290.4 1022.4,293.4 1018.8,297.7 1014.6,301.4Z"/>
</g>
<g fill="none" stroke="#3c362a" stroke-linecap="round" stroke-linejoin="round" filter="url(#pb)" opacity="0.33">
 <!-- Ø15 annotation -->
 <ellipse cx="1112" cy="187" rx="9" ry="12" transform="rotate(18 1112 187)" stroke-width="2.4"/>
 <path d="M1120 168 L1104 208" stroke-width="2.4"/>
 <path d="M1130 190 L1136 178 L1135 197 M1145 180 L1157 174 M1145 180 L1143 190 Q1156 184 1156 193 Q1154 201 1144 200" stroke-width="2.4"/>
 <path d="M1128 206 L1166 198" stroke-width="2.6"/>
 <path d="M1088 186 L1060 192 L1052 201 L1034 219" stroke-width="2.2"/>
 <path d="M1022 226 L1031 208 L1042 222Z" stroke-width="2.2" fill="#3c362a"/>
 <path d="M1001 197 Q1012 186 1022 198 Q1030 212 1024 226 M990 205 Q1008 190 1020 215" stroke-width="1.6"/>
 <!-- centre lines -->
 <path d="M1043 100 L1044 180 M1045 200 L1047 300 L1052 380 L1068 508" stroke-width="1.5"/>
 <path d="M858 270 H878 M902 270 H934" stroke-width="1.6"/>
 <path d="M862 262 V290" stroke-width="1.4"/>
 <!-- tail sketch -->
 <path d="M1238 372 Q1300 350 1360 362 Q1330 388 1262 396 Q1232 396 1226 384 Q1240 372 1290 372" stroke-width="2"/>
 <path d="M1232 360 Q1240 400 1225 440 M1247 330 Q1262 380 1250 428" stroke-width="1.8"/>
 <path d="M1260 392 Q1310 410 1360 440 M1300 372 L1380 340" stroke-width="1.4"/>
 <path d="M1212 300 Q1228 340 1222 380" stroke-width="1.6"/>
 <path d="M930 130 Q890 180 872 250 M1100 110 Q1180 150 1210 230 Q1228 270 1232 300" stroke-width="1.3"/>
 <path d="M1195 260 L1215 200 M1205 290 L1228 250" stroke-width="1.5"/>
</g>
<g id="hole-cross" fill="none" stroke="#5d636c" stroke-width="3" stroke-linecap="round" filter="url(#pb)" opacity="0.8"><path d="M986.5 248 L988 280.5 M974 264.8 L999 259"/></g>
<!-- selection arrow on tail -->
<path d="M1304 396.6 L1299.6 411.4 L1316 410Z M1310 405.2 L1324.6 395.6" fill="none" stroke="#e9ecef" stroke-width="1.8" stroke-linejoin="round"/>
<!-- origin marker -->
<circle cx="534.5" cy="745.3" r="5.6" fill="#fff" stroke="#111" stroke-width="2.2"/><circle cx="534.5" cy="745.3" r="1.9" fill="#111"/>

</svg>
</div>
<!-- FEATURE PANEL -->
<div id="fpanel" class="abs"></div>
<!-- TAB BAR -->
<div id="tabbar" class="abs"></div>
<div id="bottomline" class="abs"></div>
<div id="ui" style="position:absolute;left:0;top:0;width:1600px;height:902px;will-change:transform"><div class="t" style="left:35.60px;top:8px;font-size:20.5px;color:#6a6a6a;letter-spacing:1.052px;">onshape</div>
<div class="t" style="left:171.50px;top:7px;font-size:27px;color:#333;letter-spacing:0.111px;font-weight:700;">Tech Tip - Insert Image</div>
<div class="t" style="left:477.00px;top:15px;font-size:17.5px;color:#999;letter-spacing:1.021px;">Main</div>
<div class="btn" style="left:1059px;width:109px"></div><div class="btn" style="left:1178px;width:156px"></div><div class="abs" style="left:1345px;top:0;width:79px;height:40px;background:#2a4fa8;border-radius:0 0 5px 5px"></div><div class="t" style="left:1075.00px;top:11px;font-size:17.5px;color:#333;letter-spacing:-0.227px;-webkit-text-stroke:0.3px #333;">App Store</div>
<div class="t" style="left:1195.00px;top:11px;font-size:17.5px;color:#333;letter-spacing:-0.143px;-webkit-text-stroke:0.3px #333;">Learning Center</div>
<div class="t" style="left:1362.00px;top:11px;font-size:17.5px;color:#fff;letter-spacing:-0.422px;">Share</div>
<div class="t" style="left:1524.00px;top:11px;font-size:17.5px;color:#333;letter-spacing:-0.135px;-webkit-text-stroke:0.3px #333;">Michael</div>
<div class="abs" style="left:1033px;top:1px;width:20px;height:20px;background:#2a4fa8;border-radius:3px"></div><div class="t" style="left:1040.00px;top:5px;font-size:13px;color:#fff;letter-spacing:0.000px;font-weight:700;">1</div>
<div class="t" style="left:177.50px;top:58px;font-size:18px;color:#333;letter-spacing:-0.500px;-webkit-text-stroke:0.3px #333;">Sketch</div>
<div class="abs" style="left:1412px;top:48px;width:181px;height:38px;background:#eee;border-radius:4px"></div><div class="t" style="left:1424.00px;top:59px;font-size:17.5px;color:#333;letter-spacing:-0.241px;-webkit-text-stroke:0.3px #333;">Search tools...</div>
<div class="abs" style="left:1538px;top:58px;width:21px;height:20px;border:1px solid #c4c4c4;border-radius:3px;background:#f4f4f4"></div><div class="abs" style="left:1560px;top:58px;width:21px;height:20px;border:1px solid #c4c4c4;border-radius:3px;background:#f4f4f4"></div><div class="t" style="left:1543.00px;top:62px;font-size:13px;color:#333;letter-spacing:0.000px;-webkit-text-stroke:0.3px #333;font-family:'DejaVu Sans',sans-serif;">⌥</div>
<div class="t" style="left:1566.00px;top:62px;font-size:13px;color:#333;letter-spacing:0.000px;-webkit-text-stroke:0.3px #333;">C</div>
<div class="abs" style="left:1271px;top:54.5px;width:24.5px;height:24.5px;border:1px solid #8a8a8a;border-radius:4px;background:#fff"></div><div class="abs" style="left:1341.5px;top:54.5px;width:25px;height:24.5px;border:1px solid #8a8a8a;border-radius:4px;background:#fff"></div><div class="t" style="left:1275.50px;top:59px;font-size:13px;color:#333;letter-spacing:-0.875px;-webkit-text-stroke:0.3px #333;">Sg</div>
<div class="t" style="left:1345.50px;top:59px;font-size:13px;color:#333;letter-spacing:-0.812px;-webkit-text-stroke:0.3px #333;">BP</div>
<div class="t" style="left:51.80px;top:103px;font-size:16px;color:#333;letter-spacing:0.001px;font-weight:700;">Features (6)</div>
<div class="abs" style="left:96px;top:131.6px;width:198px;height:36.6px;border:1px solid #d4d4d4;border-radius:3px;background:#fff"></div><div class="t" style="left:102.60px;top:142px;font-size:17px;color:#aaa;letter-spacing:-0.475px;font-style:italic;">Filter by name or type</div>
<div class="t" style="left:75.80px;top:177px;font-size:16.5px;color:#444;letter-spacing:0.152px;-webkit-text-stroke:0.3px #444;">Default geometry</div>
<div class="t" style="left:103.00px;top:210px;font-size:16.5px;color:#444;letter-spacing:-0.200px;-webkit-text-stroke:0.3px #444;">Origin</div>
<div class="t" style="left:103.00px;top:243px;font-size:16.5px;color:#aaa;letter-spacing:0.438px;">Top</div>
<div class="t" style="left:103.00px;top:276px;font-size:16.5px;color:#aaa;letter-spacing:0.375px;">Front</div>
<div class="t" style="left:103.00px;top:308px;font-size:16.5px;color:#aaa;letter-spacing:0.000px;">Right</div>
<div class="abs" style="left:46px;top:334px;width:252px;height:29px;background:#e9eef5;border-bottom:1px solid #a9c7ea"></div><div class="abs" style="left:46px;top:367px;width:252px;height:29px;background:#bddcf3"></div><div class="t" style="left:79.60px;top:341px;font-size:16.5px;color:#444;letter-spacing:-0.255px;-webkit-text-stroke:0.3px #444;">Sketch 1</div>
<div class="t" style="left:79.60px;top:374px;font-size:16.5px;color:#333;letter-spacing:-0.298px;font-weight:700;">Extrude 1</div>
<div class="abs" style="left:52px;top:409px;width:240px;height:8px;background:#c9c9c9"></div><div class="abs" style="left:51px;top:579px;width:247px;height:1px;background:#d8d8d8"></div><div class="t" style="left:75.80px;top:590px;font-size:16.5px;color:#444;letter-spacing:-0.231px;-webkit-text-stroke:0.3px #444;">Parts (1)</div>
<div class="t" style="left:103.50px;top:622px;font-size:16.5px;color:#333;letter-spacing:-0.155px;font-weight:700;">Part 1</div>
<div class="abs" style="left:57.5px;top:202px;width:1px;height:131px;background:#d0d0d0"></div><div class="abs" style="left:52px;top:332px;width:12px;height:1px;background:#d0d0d0"></div><div class="abs" style="left:46px;top:862px;width:49px;height:35px;background:#cfcfcf"></div><div class="abs" style="left:95px;top:862px;width:251px;height:36px;background:#fff;border-bottom:3px solid #2a4fa8;border-radius:0 0 3px 3px"></div><div class="abs" style="left:349px;top:862px;width:252px;height:33px;background:#ebebeb;border-radius:0 0 7px 7px;box-shadow:0 1px 1px rgba(0,0,0,.15)"></div><div class="abs" style="left:604px;top:862px;width:252px;height:33px;background:#ebebeb;border-radius:0 0 7px 7px;box-shadow:0 1px 1px rgba(0,0,0,.15)"></div><div class="abs" style="left:0;top:862px;width:46px;height:35px;background:#f5f5f5"></div><div class="t" style="left:137.50px;top:871px;font-size:17.5px;color:#444;letter-spacing:-0.266px;-webkit-text-stroke:0.3px #444;">Part Studio 1</div>
<div class="t" style="left:391.00px;top:871px;font-size:17.5px;color:#555;letter-spacing:-0.190px;-webkit-text-stroke:0.3px #555;">Sketch_Fish.jpeg</div>
<div class="t" style="left:645.70px;top:871px;font-size:17.5px;color:#555;letter-spacing:-0.126px;-webkit-text-stroke:0.3px #555;">Assembly 1</div>
<div class="abs" style="left:323.5px;top:94px;width:277px;height:364px;background:#fff;box-shadow:0 1px 6px rgba(0,0,0,.28)"></div><div class="abs" style="left:529.5px;top:94px;width:35px;height:35px;background:#5db54b"></div><div class="abs" style="left:323.5px;top:129px;width:277px;height:1px;background:#dcdcdc"></div><div class="t" style="left:331.40px;top:104px;font-size:15.6px;color:#333;letter-spacing:-0.167px;font-weight:700;">Extrude 1</div>
<div class="abs" style="left:323.5px;top:162px;width:277px;height:1px;background:#dcdcdc"></div><div class="abs" style="left:323.5px;top:160px;width:129.5px;height:2.7px;background:#2a4fa8"></div><div class="t" style="left:371.20px;top:138px;font-size:15px;color:#2a4fa8;letter-spacing:-0.647px;font-weight:700;">Solid</div>
<div class="t" style="left:501.40px;top:138px;font-size:15.5px;color:#444;letter-spacing:-0.473px;-webkit-text-stroke:0.3px #444;">Surface</div>
<div class="abs" style="left:323.5px;top:194.6px;width:277px;height:1px;background:#dcdcdc"></div><div class="abs" style="left:323.5px;top:192.7px;width:57.5px;height:2.6px;background:#2a4fa8"></div><div class="t" style="left:337.00px;top:171px;font-size:15px;color:#2a4fa8;letter-spacing:-0.669px;font-weight:700;">New</div>
<div class="t" style="left:394.60px;top:171px;font-size:15.5px;color:#444;letter-spacing:-0.931px;-webkit-text-stroke:0.3px #444;">Add</div>
<div class="t" style="left:447.50px;top:171px;font-size:15.5px;color:#444;letter-spacing:-1.077px;-webkit-text-stroke:0.3px #444;">Remove</div>
<div class="t" style="left:527.50px;top:171px;font-size:15.5px;color:#444;letter-spacing:-0.042px;-webkit-text-stroke:0.3px #444;">Intersect</div>
<div class="abs" style="left:327px;top:201.4px;width:269.4px;height:85.6px;background:#e4f1fa;border:1.5px solid #3f72d6;border-radius:2px"></div><div class="abs" style="left:328.5px;top:227px;width:266px;height:29px;background:#d6e9f6"></div><div class="t" style="left:334.80px;top:211px;font-size:12.4px;color:#777;letter-spacing:0.088px;">Faces and sketch regions to extrude</div>
<div class="t" style="left:336.60px;top:234px;font-size:16px;color:#333;letter-spacing:-0.044px;-webkit-text-stroke:0.3px #333;">Face of Sketch 1</div>
<div class="t" style="left:336.60px;top:264px;font-size:16px;color:#333;letter-spacing:-0.044px;-webkit-text-stroke:0.3px #333;">Face of Sketch 1</div>
<div class="t" style="left:571.50px;top:233px;font-size:17px;color:#aeb6bd;letter-spacing:0.000px;">×</div>
<div class="t" style="left:571.50px;top:263px;font-size:17px;color:#aeb6bd;letter-spacing:0.000px;">×</div>
<div class="t" style="left:330.90px;top:300px;font-size:16.3px;color:#333;letter-spacing:0.744px;-webkit-text-stroke:0.3px #333;">Blind</div>
<div class="abs" style="left:330px;top:325px;width:238px;height:1px;background:#e0e0e0"></div><div class="abs" style="left:550px;top:307.3px;width:0;height:0;border-left:4.5px solid transparent;border-right:4.5px solid transparent;border-top:5px solid #333"></div><div class="t" style="left:330.20px;top:338px;font-size:14.7px;color:#888;letter-spacing:-0.147px;">Depth</div>
<div class="abs" style="left:512px;top:333px;width:52px;height:23px;background:#b5d3f7"></div><div class="t" style="left:513.30px;top:338px;font-size:15.8px;color:#333;letter-spacing:0.319px;-webkit-text-stroke:0.3px #333;">10 mm</div>
<div class="abs" style="left:376px;top:356.3px;width:191.5px;height:2.3px;background:#2a4fa8"></div><div class="abs" style="left:329px;top:369.5px;width:14.5px;height:14.5px;background:#2a4fa8;border-radius:2.5px"></div><svg class="abs" style="left:329px;top:369.5px" width="14.5" height="14.5" viewBox="0 0 14.5 14.5"><path d="M3.4 7.6l2.6 2.6 5.2-5.6" fill="none" stroke="#fff" stroke-width="2" stroke-linecap="round" stroke-linejoin="round"/></svg><div class="t" style="left:348.80px;top:369px;font-size:16.5px;color:#777;letter-spacing:0.283px;">Symmetric</div>
<div class="abs" style="left:329px;top:404.5px;width:14.5px;height:14.5px;background:#fff;border:1px solid #d0d0d0;border-radius:2.5px"></div><div class="t" style="left:348.80px;top:403px;font-size:16.5px;color:#777;letter-spacing:0.362px;">Draft</div>
<div class="abs" style="left:331.5px;top:445px;width:141px;height:2px;background:#666"></div><div class="abs" style="left:422.5px;top:439.5px;width:13.6px;height:13.6px;background:#fff;border:1.5px solid #666;border-radius:50%"></div><div class="abs" style="left:579.5px;top:437.5px;width:14px;height:14px;background:#a9a9a9;border-radius:50%"></div><div class="t" style="left:583.80px;top:440px;font-size:11px;color:#fff;letter-spacing:0.000px;font-weight:700;">?</div>
<!-- ===== TOP BAR ICONS ===== -->
<svg class="abs" style="left:0;top:0" width="30" height="36" viewBox="0 0 30 36">
 <path d="M14 5.3 L2.2 12.2 V18.9 L6.2 20.9 V14.6 L17.3 8.1Z" fill="#66b84f"/>
 <path d="M20.4 9.1 L26.2 12.6 V25.9 L21.1 29 V13.4 L17.1 11.2Z" fill="#66b84f"/>
 <path d="M2.2 21.7 V26.6 L14 33 L19.5 29.9 V24.6 L14 27.7Z" fill="#66b84f"/>
 <path d="M14.6 13.6 L10.2 16.2 L9.2 18 M9.4 20.8 L13.6 24.2 L15.4 23.6 M17.6 22 L18.8 20.6 V16.4 L16.6 14.8" fill="none" stroke="#666" stroke-width="1.5" stroke-linejoin="round" stroke-linecap="round"/>
</svg>
<div class="abs" style="left:137px;top:10.6px;width:20.5px;height:3.3px;background:#2d2d2d"></div>
<div class="abs" style="left:137px;top:17.6px;width:20.5px;height:3.3px;background:#2d2d2d"></div>
<div class="abs" style="left:137px;top:25.2px;width:20.5px;height:3.6px;background:#2d2d2d"></div>
<svg class="abs" style="left:539px;top:8px" width="22" height="22" viewBox="0 0 22 22" fill="none" stroke="#3a3a3a" stroke-width="2" stroke-linecap="round">
 <g transform="rotate(-38 11 11)"><rect x="1.6" y="7.4" width="10.4" height="7.2" rx="3.6"/><rect x="10" y="7.4" width="10.4" height="7.2" rx="3.6"/></g>
</svg>
<svg class="abs" style="left:979px;top:8px" width="28" height="24" viewBox="0 0 28 24" fill="none" stroke="#555" stroke-width="1.9" stroke-linecap="round" stroke-linejoin="round">
 <path d="M7 1.8 C4.4 1.8 4.6 4 4.6 6.4 C4.6 9 4 11.2 1.8 11.8 C4 12.4 4.6 14.6 4.6 17.2 C4.6 19.8 4.4 22 7 22"/>
 <path d="M20.6 1.8 C23.2 1.8 23 4 23 6.4 C23 9 23.6 11.2 25.8 11.8 C23.6 12.4 23 14.6 23 17.2 C23 19.8 23.2 22 20.6 22"/>
 <path d="M9 12.2 l3.4 3.6 l6 -7.4" stroke-width="2.2"/>
</svg>
<svg class="abs" style="left:1021px;top:9px" width="26" height="24" viewBox="0 0 26 24">
 <path d="M12 1.6 c1.2 0 2 .8 2 1.9 c3.2 1 4.6 3.6 4.6 7 c0 4.2 1.2 5.8 3.2 7.4 v1.3 H2.2 v-1.3 c2 -1.6 3.2 -3.2 3.2 -7.4 c0 -3.4 1.4 -6 4.6 -7 c0 -1.1 .8 -1.9 2 -1.9z" fill="#6b6b6b"/>
 <path d="M9.2 20.4 h5.6 a2.8 2.6 0 0 1 -5.6 0z" fill="#6b6b6b"/>
</svg>
<svg class="abs" style="left:1436px;top:8px" width="24" height="24" viewBox="0 0 24 24">
 <circle cx="12" cy="12" r="11.2" fill="#555"/>
 <path d="M8.2 9.2 c0 -2.4 1.7 -3.8 3.9 -3.8 c2.3 0 3.9 1.4 3.9 3.4 c0 1.7 -1 2.4 -2 3.2 c-.7 .6 -1 1 -1 2.2" fill="none" stroke="#fff" stroke-width="2.6"/>
 <circle cx="12.9" cy="18.2" r="1.7" fill="#fff"/>
</svg>
<div class="abs" style="left:1465px;top:17.5px;width:0;height:0;border-left:5px solid transparent;border-right:5px solid transparent;border-top:5.5px solid #333"></div>
<div class="abs" style="left:1587.5px;top:17.5px;width:0;height:0;border-left:5px solid transparent;border-right:5px solid transparent;border-top:5.5px solid #333"></div>
<!-- avatar -->
<svg class="abs" style="left:1488px;top:5px" width="30" height="31" viewBox="0 0 30 31">
 <defs><filter id="avb" x="-10%" y="-10%" width="120%" height="120%"><feGaussianBlur stdDeviation="0.9"/></filter><clipPath id="avc"><rect width="30" height="31"/></clipPath></defs>
 <rect width="30" height="31" fill="#e6e2d4"/>
 <g clip-path="url(#avc)" filter="url(#avb)">
  <rect x="0" y="0" width="30" height="31" fill="#e4e0d0"/>
  <path d="M-1 32 L1 26 Q8 21 12 21 L20 21 Q27 23 29 27 L30 32Z" fill="#4b4b4b"/>
  <path d="M12 21 L15.5 29 L19 21Z" fill="#ece9e2"/>
  <ellipse cx="15" cy="13.5" rx="6.6" ry="8.4" fill="#c66e62"/>
  <path d="M7.6 11 Q7 2 15 2.2 Q23 2 22.4 11 Q21 6.5 15 6.6 Q9 6.5 7.6 11Z" fill="#2e2420"/>
  <path d="M9.5 12.4 h4.4 M16.2 12.4 h4.4" stroke="#3a2a28" stroke-width="1.5"/>
  <path d="M12 18 q3 1.6 6 0" stroke="#e9d2c8" stroke-width="1.1" fill="none"/>
 </g>
</svg>
<!-- ===== LEFT BAR ICONS ===== -->
<div class="abs" style="left:0;top:44px;width:46px;height:46px;background:#fafafa;border-top:1px solid #e0e0e0;border-right:1px solid #e0e0e0"></div>
<svg class="abs" style="left:6px;top:52px" width="32" height="28" viewBox="0 0 32 28" fill="none" stroke="#2d2d2d" stroke-linecap="round">
 <circle cx="8" cy="8.2" r="4.4" stroke-width="2"/>
 <path d="M8 12.8 V21" stroke-width="2.2"/>
 <path d="M8.2 18.5 C9 15.5 12 15.6 15.6 13.6" stroke-width="2.2"/>
 <path d="M5.8 19.6 h4.6 v4.6 h-4.6z M13.6 11.8 h3.8 v3.6 h-3.8z" fill="#2d2d2d" stroke-width="1"/>
 <path d="M16.4 4.6 H27.4 M21.6 11.2 H27.4 M21.6 17.6 H27.4 M16.4 24 H27.4" stroke-width="2.3" stroke-linecap="butt"/>
</svg>
<svg class="abs" style="left:8px;top:96px" width="30" height="28" viewBox="0 0 30 28">
 <path d="M8 2 V25" stroke="#2d2d2d" stroke-width="1.8" stroke-dasharray="2.4 2.2" fill="none"/>
 <circle cx="8" cy="13.4" r="4.2" fill="#2d2d2d"/>
 <path d="M14.2 20 H25 M19.6 14.6 V25.4" stroke="#2a4fa8" stroke-width="2.4" fill="none"/>
</svg>
<svg class="abs" style="left:7px;top:140px" width="30" height="28" viewBox="0 0 30 28">
 <ellipse cx="14" cy="11" rx="12.4" ry="8.6" fill="#2d2d2d"/>
 <path d="M6.8 16 C6.4 20 5 22.6 2.6 24.6 C7 23.6 10.6 21.4 12.6 18.6Z" fill="#2d2d2d"/>
</svg>
<svg class="abs" style="left:6px;top:182px" width="32" height="30" viewBox="0 0 32 30" fill="none" stroke="#2d2d2d" stroke-width="1.6" stroke-linejoin="round">
 <path d="M3 14.6 L11.6 11.2 L20 14 V23 L11 27.4 L3 23.4Z M3 14.6 L11 18 L20 14 M11 18 V27.4"/>
 <path d="M20 20.6 L24 18.4 V13.4" />
 <circle cx="23.2" cy="8" r="5.2" fill="#2d2d2d" stroke="none"/>
 <path d="M21.4 6.8 c0 -1.2 .8 -1.9 1.9 -1.9 c1.1 0 1.9 .7 1.9 1.6 c0 1.2 -1.8 1.3 -1.8 2.7 M23.3 11 v.4" stroke="#fff" stroke-width="1.3"/>
</svg>
<svg class="abs" style="left:7px;top:228px" width="30" height="30" viewBox="0 0 30 30" fill="none" stroke="#2d2d2d" stroke-linecap="round">
 <path d="M13 8.4 A8.6 8.6 0 1 1 10.2 23.6" stroke-width="2"/>
 <path d="M17 4.4 V7.6 M13.6 3.4 H20.4 M23.4 7.4 L24.8 6" stroke-width="2"/>
 <path d="M17 16.6 L20.6 12.4" stroke-width="2.2"/>
 <path d="M5 11.6 H10.4 M3.4 16 H8.8 M5 20.4 H9.6" stroke-width="1.7"/>
</svg>
<svg class="abs" style="left:7px;top:868px" width="30" height="27" viewBox="0 0 30 27">
 <path d="M2.4 2.6 H22.6 Q24 2.6 24 4 V7 H14 Q9 9 9.6 14.6 H4 Q2.4 14.6 2.4 13Z" fill="#2d2d2d"/>
 <circle cx="17" cy="14.6" r="5.4" fill="none" stroke="#2d2d2d" stroke-width="2.4"/>
 <path d="M21 18.8 L26 24.6" stroke="#2d2d2d" stroke-width="3" stroke-linecap="round"/>
</svg>
<!-- tab bar + button -->
<svg class="abs" style="left:56px;top:869px" width="22" height="22" viewBox="0 0 22 22"><path d="M11 1.6 V20.4 M1.6 11 H20.4" stroke="#3c3c3c" stroke-width="3.2"/></svg>
<svg class="abs" style="left:56px;top:55px" width="24" height="22" viewBox="0 0 24 22" fill="none" stroke="#3a3a3a" stroke-width="1.1" stroke-linejoin="round" stroke-linecap="round"><path d="M3 9.2 L10.8 2.6 V6.6 C17 6.8 20.6 10.4 20 18.6 C18.4 14.4 15.6 12.4 10.8 12.4 V16.2Z" fill="#2d2d2d" stroke="#2d2d2d" stroke-width="0.8"/></svg>
<svg class="abs" style="left:100px;top:55px" width="24" height="22" viewBox="0 0 24 22" fill="none" stroke="#3a3a3a" stroke-width="1.1" stroke-linejoin="round" stroke-linecap="round"><path d="M21 9.2 L13.2 2.6 V6.6 C7 6.8 3.4 10.4 4 18.6 C5.6 14.4 8.4 12.4 13.2 12.4 V16.2Z" fill="#9b9b9b" stroke="#9b9b9b" stroke-width="0.8"/></svg>
<div class="sep" style="left:134.5px"></div>
<svg class="abs" style="left:146px;top:54px" width="28" height="26" viewBox="0 0 28 26" fill="none" stroke="#3a3a3a" stroke-width="1.1" stroke-linejoin="round" stroke-linecap="round"><path d="M4.4 21.6 L6.4 14.8 L19.6 2.8 L23.6 7 L10.6 19.4Z M6.4 14.8 L10.6 19.4 M17 5.2 L21.2 9.4" stroke-width="1.5"/><path d="M4.4 21.6 L6.2 20.9 L5 19.6Z" fill="#3a3a3a"/><path d="M2 23.6 H25" stroke="#2a4fa8" stroke-width="1.4"/></svg>
<div class="sep" style="left:246.5px"></div>
<svg class="abs" style="left:258px;top:54px" width="28" height="26" viewBox="0 0 28 26" fill="none" stroke="#3a3a3a" stroke-width="1.1" stroke-linejoin="round" stroke-linecap="round"><path d="M3.4 2 H21 Q25 2 25 6 V24 H7 L2 21.6 V3.4 Q2 2 3.4 2Z" fill="#fff"/><path d="M5.6 4.4 H22.6 V9.4 M5.6 4.4 V20.4 L10.8 22.8 M8.6 7 H19 M8.6 7 V18.6" stroke="#777" stroke-width="0.9"/><path d="M10.8 9.4 H25 V24 H10.8Z" fill="#8e8e8e"/><path d="M10.8 9.4 L13.2 11.6 V24 M13.2 11.6 H25" stroke="#666" stroke-width="0.8"/></svg>
<svg class="abs" style="left:301px;top:54px" width="28" height="26" viewBox="0 0 28 26" fill="none" stroke="#3a3a3a" stroke-width="1.1" stroke-linejoin="round" stroke-linecap="round"><path d="M20.6 5.2 A10.6 10.6 0 1 0 20.6 21.6 L15.8 16.6 A4 4 0 1 1 15.8 10.2Z" fill="#8e8e8e"/><ellipse cx="18.4" cy="7.8" rx="3.5" ry="1.9" transform="rotate(-47 18.4 7.8)" fill="#fff"/><ellipse cx="18.4" cy="19" rx="3.5" ry="1.9" transform="rotate(47 18.4 19)" fill="#fff"/><path d="M10 13.4 H26" stroke-dasharray="2.4 1.6" stroke-width="1"/><path d="M3.4 8 V19" stroke-dasharray="1.5 1.5" stroke-width="0.8"/></svg>
<svg class="abs" style="left:344px;top:54px" width="28" height="26" viewBox="0 0 28 26" fill="none" stroke="#3a3a3a" stroke-width="1.1" stroke-linejoin="round" stroke-linecap="round"><path d="M2.4 20 C2.4 12 6 10.4 12 10.4 C16.6 10.4 18 9 18.4 5.4 C18.8 2.4 25.6 2.4 25.4 5.8 C25 13.4 21 16.6 14.4 16.8 C11 17 9.4 18 9.4 21 C9.4 25 2.4 25 2.4 20Z" fill="#8e8e8e"/><ellipse cx="21.9" cy="5" rx="3.5" ry="2.2" fill="#fff"/></svg>
<svg class="abs" style="left:387px;top:54px" width="26" height="26" viewBox="0 0 26 26" fill="none" stroke="#3a3a3a" stroke-width="1.1" stroke-linejoin="round" stroke-linecap="round"><path d="M7.4 4.6 C7.4 13 5.6 18 2 21.6 C7 24.4 19 24.4 24 21.6 C20.4 18 18.6 13 18.6 4.6Z" fill="#8e8e8e"/><ellipse cx="13" cy="4.6" rx="5.6" ry="2.4" fill="#fff"/><path d="M2 21.6 C7 19.4 19 19.4 24 21.6" stroke-width="0.7" stroke="#777"/></svg>
<svg class="abs" style="left:429px;top:54px" width="28" height="26" viewBox="0 0 28 26" fill="none" stroke="#3a3a3a" stroke-width="1.1" stroke-linejoin="round" stroke-linecap="round"><path d="M2.4 7.4 L9 10 C13 5.6 19 8.6 24.6 5.4 V18.8 C19 22 13 19 9 23.6 L2.4 20.6Z" fill="#bdbdbd"/><path d="M2.4 7.4 C7 3 12 5.4 17.6 2.6 L24.6 5.4 C19 8.6 13 5.6 9 10Z" fill="#fff"/><path d="M2.4 7.4 L9 10 V23.6 L2.4 20.6Z" fill="#8e8e8e"/><path d="M9 10 V23.6" /><path d="M16.6 9.6 V17" stroke="#111" stroke-width="2.2"/><path d="M12.8 14.4 H20.4 L16.6 19.2Z" fill="#111" stroke="#111" stroke-width="0.6"/></svg>
<svg class="abs" style="left:466px;top:62px" width="16" height="10" viewBox="0 0 16 10"><path d="M2 2 L8 8 L14 2" fill="none" stroke="#555" stroke-width="2"/></svg>
<div class="sep" style="left:488.5px"></div>
<svg class="abs" style="left:500px;top:54px" width="28" height="26" viewBox="0 0 28 26" fill="none" stroke="#3a3a3a" stroke-width="1.1" stroke-linejoin="round" stroke-linecap="round"><path d="M2 11 Q3.4 2 12 2 H21.4 L25 4.6 V24 H5.4 L2 21.4Z" fill="#fff"/><path d="M2 11 Q3.4 2 12 2 L15 4.4 Q7.2 4.8 5.4 13.4Z" fill="#8e8e8e"/><path d="M5.4 13.4 V24 M15 4.4 H25" stroke-width="0.9"/></svg>
<svg class="abs" style="left:543px;top:54px" width="28" height="26" viewBox="0 0 28 26" fill="none" stroke="#3a3a3a" stroke-width="1.1" stroke-linejoin="round" stroke-linecap="round"><path d="M2 11 L12 2 H21.4 L25 4.6 V24 H5.4 L2 21.4Z" fill="#fff"/><path d="M2 11 L12 2 L15 4.4 L5.4 13.4Z" fill="#8e8e8e"/><path d="M5.4 13.4 V24 M15 4.4 H25" stroke-width="0.9"/></svg>
<svg class="abs" style="left:586px;top:54px" width="28" height="26" viewBox="0 0 28 26" fill="none" stroke="#3a3a3a" stroke-width="1.1" stroke-linejoin="round" stroke-linecap="round"><path d="M12.4 2.4 H22 L25 4.4 V24.4 H7 L2 22Z" fill="#8e8e8e"/><path d="M12.4 2.4 L15.6 4.4 H25 M15.6 4.4 L7 24.4" stroke-width="0.8" stroke="#555"/></svg>
<svg class="abs" style="left:629px;top:54px" width="28" height="26" viewBox="0 0 28 26" fill="none" stroke="#3a3a3a" stroke-width="1.1" stroke-linejoin="round" stroke-linecap="round"><path d="M14.4 2.4 H19 L24.6 7.6 V24.6 H6.6 L2 20.4 V15 H6.8Z" fill="#fff"/><path d="M14.4 4.6 L18.6 8.6 V19.4 H7.4 L4.4 16.4Z" fill="#8e8e8e"/><path d="M2 15 L6.6 19.4 V24.6 M6.6 19.4 H18.6 M19 2.4 L18.6 8.6 L24.6 7.6" stroke-width="0.9"/></svg>
<svg class="abs" style="left:671px;top:54px" width="28" height="26" viewBox="0 0 28 26" fill="none" stroke="#3a3a3a" stroke-width="1.1" stroke-linejoin="round" stroke-linecap="round"><path d="M2 2 H21.6 L25 4.8 V24.6 H5.4 L2 21.8Z" fill="#fff"/><path d="M2 2 L5.4 4.8 H25 M5.4 4.8 V24.6" stroke-width="0.9"/><path d="M8.6 4.8 H21.6 V21.2 H8.6Z" fill="#8e8e8e" stroke="#666" stroke-width="0.8"/><path d="M8.6 4.8 L10.6 6 V19.4 H21.6" stroke="#ddd" stroke-width="1"/></svg>
<svg class="abs" style="left:714px;top:54px" width="28" height="26" viewBox="0 0 28 26" fill="none" stroke="#3a3a3a" stroke-width="1.1" stroke-linejoin="round" stroke-linecap="round"><path d="M2 2 H21.6 L25 4.8 V24.6 H5.4 L2 21.8Z" fill="#fff"/><path d="M2 2 L5.4 4.8 H25 M5.4 4.8 V24.6" stroke-width="0.9"/><circle cx="15.2" cy="14.8" r="6.6" fill="#8e8e8e" stroke="#555"/><circle cx="16.4" cy="13.4" r="3.4" fill="#c8c8c8" stroke="#666" stroke-width="0.7"/></svg>
<svg class="abs" style="left:759px;top:54px" width="22" height="26" viewBox="0 0 22 26" fill="none" stroke="#3a3a3a" stroke-width="1.1" stroke-linejoin="round" stroke-linecap="round"><path d="M3.6 5 V21 C3.6 24.4 18.4 24.4 18.4 21 V5" fill="#fff"/><ellipse cx="11" cy="5" rx="7.4" ry="2.8" fill="#fff"/><path d="M3.6 9 C6 11.4 16 11.4 18.4 9 M3.6 12 C6 14.4 16 14.4 18.4 12 M3.6 15 C6 17.4 16 17.4 18.4 15 M3.6 18 C6 20.4 16 20.4 18.4 18" stroke="#777" stroke-width="1.2"/></svg>
<div class="sep" style="left:792.5px"></div>
<svg class="abs" style="left:805px;top:54px" width="28" height="26" viewBox="0 0 28 26" fill="none" stroke="#3a3a3a" stroke-width="1.1" stroke-linejoin="round" stroke-linecap="round"><rect x="2" y="2.4" width="22.6" height="21.6" rx="2.4" fill="#8e8e8e"/><rect x="3.6" y="4" width="9" height="8.6" fill="#fff" stroke="none"/><path d="M13.4 2.4 V24 M2 13.4 H24.6" stroke-width="1.3"/></svg>
<svg class="abs" style="left:841px;top:62px" width="16" height="10" viewBox="0 0 16 10"><path d="M2 2 L8 8 L14 2" fill="none" stroke="#555" stroke-width="2"/></svg>
<svg class="abs" style="left:869px;top:54px" width="28" height="26" viewBox="0 0 28 26" fill="none" stroke="#3a3a3a" stroke-width="1.1" stroke-linejoin="round" stroke-linecap="round"><path d="M3 5.4 L6.4 2.4 H10.6 V24 H6.4 L3 21.6Z" fill="#fff"/><path d="M3 5.4 H7.4 V24" stroke-width="0.9"/><path d="M10.6 3.6 L13.4 5.6 V17.4 L15.6 12 V3.4 L18.6 2.4 H22.4 L25.4 5 V24 H18.6 V13.4 L15 21.6 H10.6Z" fill="#8e8e8e"/><path d="M12 4 V20.6" stroke="#bbb" stroke-width="1.2"/></svg>
<div class="sep" style="left:905.5px"></div>
<svg class="abs" style="left:916px;top:54px" width="30" height="26" viewBox="0 0 30 26" fill="none" stroke="#3a3a3a" stroke-width="1.1" stroke-linejoin="round" stroke-linecap="round"><ellipse cx="10" cy="13" rx="7.8" ry="8.4" fill="#fff"/><ellipse cx="19.4" cy="13" rx="7.8" ry="8.4" fill="#fff"/><path d="M14.7 6.3 A7.8 8.4 0 0 1 14.7 19.7 A7.8 8.4 0 0 1 14.7 6.3Z" fill="#8e8e8e"/><ellipse cx="10" cy="13" rx="7.8" ry="8.4"/><ellipse cx="19.4" cy="13" rx="7.8" ry="8.4"/></svg>
<svg class="abs" style="left:954px;top:62px" width="16" height="10" viewBox="0 0 16 10"><path d="M2 2 L8 8 L14 2" fill="none" stroke="#555" stroke-width="2"/></svg>
<div class="sep" style="left:976.5px"></div>
<svg class="abs" style="left:987px;top:54px" width="32" height="28" viewBox="0 0 32 28" fill="none" stroke="#3a3a3a" stroke-width="1.1" stroke-linejoin="round" stroke-linecap="round"><path d="M2.4 16 C2.4 7 9 2.4 18.4 2.4 L21.6 7.4 C14 7.6 9.6 11.4 9.4 19.6 L5.4 22.4Z" fill="#8e8e8e" stroke="none"/><path d="M13.4 17.4 C15 13 20 10.4 25 10 L28 14.6 C24 15 21.6 16.6 20.6 19.6 C18 21.6 16.6 22.6 14.4 24.6 C13 22 13 19.6 13.4 17.4Z" fill="#fff" stroke-width="1"/><path d="M11 8.6 L17.6 14.4" stroke="#111" stroke-width="2"/><path d="M9.4 7 L14 7.6 L10.2 11.6Z" fill="#111" stroke="#111" stroke-width="0.6"/></svg>
<svg class="abs" style="left:1025px;top:62px" width="16" height="10" viewBox="0 0 16 10"><path d="M2 2 L8 8 L14 2" fill="none" stroke="#555" stroke-width="2"/></svg>
<div class="sep" style="left:1047.5px"></div>
<svg class="abs" style="left:1059px;top:54px" width="28" height="26" viewBox="0 0 28 26" fill="none" stroke="#3a3a3a" stroke-width="1.1" stroke-linejoin="round" stroke-linecap="round"><path d="M2.6 3 L24.4 5.6 V24 L2.6 20.4Z" fill="#d9d9d9" stroke-width="1.3"/><path d="M12.4 4.2 V13.4 L24.4 15" stroke-width="1.2"/></svg>
<svg class="abs" style="left:1096px;top:62px" width="16" height="10" viewBox="0 0 16 10"><path d="M2 2 L8 8 L14 2" fill="none" stroke="#555" stroke-width="2"/></svg>
<div class="sep" style="left:1117.5px"></div>
<svg class="abs" style="left:1130px;top:54px" width="26" height="26" viewBox="0 0 26 26" fill="none" stroke="#3a3a3a" stroke-width="1.1" stroke-linejoin="round" stroke-linecap="round"><path d="M4 6 L8 2.6 H19.4 L22.6 5.4 V9.6 H13 V17.6 H22.6 V24 H8 L4 20.6Z" fill="#fff" stroke-width="1.3"/><path d="M8 6.4 H22 V9.6 H13 V17.6 H22.6 V24 H8Z" fill="#8e8e8e" stroke-width="1.2"/><path d="M4 6 L8 6.4 M8 2.6" stroke-width="1"/></svg>
<svg class="abs" style="left:1166px;top:62px" width="16" height="10" viewBox="0 0 16 10"><path d="M2 2 L8 8 L14 2" fill="none" stroke="#555" stroke-width="2"/></svg>
<div class="sep" style="left:1188.5px"></div>
<svg class="abs" style="left:1199px;top:54px" width="28" height="26" viewBox="0 0 28 26" fill="none" stroke="#3a3a3a" stroke-width="1.1" stroke-linejoin="round" stroke-linecap="round"><path d="M3 8 Q3 4.4 6.6 4.4 H10 V19.4 L13.4 22.4 H24.6 V9.4 L21.6 6.6 V2.6 H14.4 V17.6" fill="#fff" stroke-width="1.3"/><path d="M3 8 V18.6 Q3 20.6 5.4 21.6 L13.4 24.4 V22.4 M24.6 22.4 L13.4 22.4" stroke-width="1.3"/><path d="M14.4 17.6 L21.6 17.6 V6.6 M14.4 17.6 L13.4 22.4" stroke-width="0.9"/><path d="M14.4 17.6 H21.6 L24.6 22.4 H13.4Z" fill="#8e8e8e" stroke="none"/></svg>
<svg class="abs" style="left:1236px;top:62px" width="16" height="10" viewBox="0 0 16 10"><path d="M2 2 L8 8 L14 2" fill="none" stroke="#555" stroke-width="2"/></svg>
<div class="sep" style="left:1259.5px"></div>
<svg class="abs" style="left:1307px;top:62px" width="16" height="10" viewBox="0 0 16 10"><path d="M2 2 L8 8 L14 2" fill="none" stroke="#555" stroke-width="2"/></svg>
<div class="sep" style="left:1329.5px"></div>
<svg class="abs" style="left:1377px;top:62px" width="16" height="10" viewBox="0 0 16 10"><path d="M2 2 L8 8 L14 2" fill="none" stroke="#555" stroke-width="2"/></svg>
<!-- ===== FEATURE PANEL ICONS ===== -->
<svg class="abs" style="left:216px;top:102px" width="26" height="21" viewBox="0 0 26 21" fill="none">
 <path d="M1.6 4 Q1.6 2.2 3.4 2.2 H8.6 L10.6 4.6 H22.6 Q24.4 4.6 24.4 6.4 V17.4 Q24.4 19 22.6 19 H6" stroke="#b9bfc9" stroke-width="1.2"/>
 <path d="M1.6 4 V9 M1.6 15.4 V17.6 Q1.6 19 3 19" stroke="#b9bfc9" stroke-width="1.2"/>
 <path d="M3.4 12.6 H12 M7.7 8.4 V16.8" stroke="#6a8fd8" stroke-width="1.6"/>
</svg>
<svg class="abs" style="left:254px;top:99px" width="26" height="26" viewBox="0 0 26 26" fill="none" stroke="#2d2d2d" stroke-linecap="round">
 <circle cx="12.6" cy="14.4" r="9" stroke-width="2.3"/>
 <path d="M12.6 5 V2.6 M9.2 2.2 H16 M19.6 6.6 L21 5.2" stroke-width="2.2"/>
 <path d="M12.6 14.4 L16.6 17.8" stroke-width="2"/>
</svg>
<svg class="abs" style="left:58px;top:140px" width="24" height="22" viewBox="0 0 24 22" fill="none" stroke="#3a3a3a" stroke-width="1.7" stroke-linejoin="round">
 <path d="M2.4 2.2 H21 L13.6 11.4 V19.6 L9.8 17.4 V11.4Z"/>
</svg>
<svg class="abs" style="left:50px;top:179px" width="18" height="13" viewBox="0 0 18 13"><path d="M2.2 2.6 L9 9.6 L15.8 2.6" fill="none" stroke="#333" stroke-width="2.2"/></svg>
<svg class="abs" style="left:50px;top:591px" width="18" height="13" viewBox="0 0 18 13"><path d="M2.2 2.6 L9 9.6 L15.8 2.6" fill="none" stroke="#333" stroke-width="2.2"/></svg>
<svg class="abs" style="left:81px;top:212px" width="12" height="12" viewBox="0 0 12 12"><circle cx="6" cy="6" r="3.8" fill="#fff" stroke="#8a8a8a" stroke-width="1.2"/><circle cx="6" cy="6" r="1.5" fill="#777"/></svg>
<svg class="abs" style="left:78px;top:240px" width="20" height="20" viewBox="0 0 20 20" fill="none" stroke="#bdbdbd" stroke-width="1.3" stroke-linejoin="round"><path d="M1.2 1.6 L18.4 3.6 V18.6 L1.2 15.6Z" fill="#ececec"/><path d="M9 2.6 V9.8 L18.4 11"/></svg>
<svg class="abs" style="left:78px;top:273px" width="20" height="20" viewBox="0 0 20 20" fill="none" stroke="#bdbdbd" stroke-width="1.3" stroke-linejoin="round"><path d="M1.2 1.6 L18.4 3.6 V18.6 L1.2 15.6Z" fill="#ececec"/><path d="M9 2.6 V9.8 L18.4 11"/></svg>
<svg class="abs" style="left:78px;top:306px" width="20" height="20" viewBox="0 0 20 20" fill="none" stroke="#bdbdbd" stroke-width="1.3" stroke-linejoin="round"><path d="M1.2 1.6 L18.4 3.6 V18.6 L1.2 15.6Z" fill="#ececec"/><path d="M9 2.6 V9.8 L18.4 11"/></svg>
<svg class="abs" style="left:53px;top:338px" width="22" height="21" viewBox="0 0 22 21" fill="none" stroke="#3a3a3a" stroke-width="1.2" stroke-linejoin="round">
 <path d="M3 17 L4.6 11.6 L14.8 2.2 L18 5.6 L7.8 15.2Z M4.6 11.6 L7.8 15.2"/><path d="M1 19.4 H20" stroke="#4a6fd0" stroke-width="1.2"/>
</svg>
<svg class="abs" style="left:53px;top:371px" width="22" height="20" viewBox="0 0 22 20" fill="none" stroke="#3a3a3a" stroke-width="1" stroke-linejoin="round">
 <path d="M2.6 1.4 H16.6 Q19.8 1.4 19.8 4.6 V18.6 H5 L1.2 16.6 V2.6 Q1.2 1.4 2.6 1.4Z" fill="#fff"/><path d="M4 3.4 H17.6 V7 M4 3.4 V15.6 L8 17.6" stroke="#777" stroke-width="0.8"/><path d="M8.4 7.4 H19.8 V18.6 H8.4Z" fill="#8e8e8e"/>
</svg>
<svg class="abs" style="left:77px;top:619px" width="22" height="20" viewBox="0 0 22 20" fill="none" stroke="#555" stroke-width="1.1" stroke-linejoin="round">
 <path d="M8 4 L11 1.4 H16.4 Q18.6 1.4 18.6 3.6 V15 L15.6 18.2 H3.6 Q1.6 18.2 1.6 16.2 V12 L4.6 9 H8Z" fill="#fff"/><path d="M8 4 H15.6 V18.2 M15.6 4 L18.4 2 M1.6 12 H8 V9 M8 12 L11 9.6 V4.6" />
</svg>
<!-- ===== DIALOG ICONS ===== -->
<svg class="abs" style="left:529.5px;top:94px" width="35" height="35" viewBox="0 0 35 35"><path d="M8.4 16.6 L16 24 L27.4 10.6" fill="none" stroke="#fff" stroke-width="3.4"/></svg>
<svg class="abs" style="left:573px;top:102px" width="19" height="19" viewBox="0 0 19 19"><path d="M3 3 L16.4 16 M16.4 3 L3 16" fill="none" stroke="#b9373a" stroke-width="3.2"/></svg>
<svg class="abs" style="left:533px;top:110px" width="20" height="28" viewBox="0 0 20 28"><path d="M3.4 3.4 V20.6 L7.6 16.8 L10.6 23.8 L13.8 22.4 L10.8 15.6 H16.4Z" fill="#111" stroke="#fff" stroke-width="1.3" stroke-linejoin="round"/></svg>
<svg class="abs" style="left:570px;top:294px" width="28" height="30" viewBox="0 0 28 30">
 <path d="M24.6 4 L10 20.6" stroke="#222" stroke-width="2.6" fill="none"/><path d="M4.4 26.6 L8 13.4 L12.6 17.6 L17.6 22.2Z" fill="#222"/>
 <path d="M3 13 L9.6 5.6 M5.8 5.2 L9.6 5.6 L9.4 9" stroke="#b5b5b5" stroke-width="1.1" fill="none"/>
</svg>
<!-- list icon tab under dialog -->
<div class="abs" style="left:305px;top:452px;width:36px;height:35px;background:#fff;border-right:1px solid #e0e0e0;border-bottom:1px solid #dcdcdc"></div>
<div class="abs" style="left:305px;top:487px;width:1px;height:375px;background:#d9d9d9"></div>
<svg class="abs" style="left:311px;top:453px" width="28" height="28" viewBox="0 0 28 28" fill="none" stroke="#444" stroke-width="1.5">
 <path d="M3.4 2.6 L5.6 5 L7.8 2.6" stroke-width="1.6"/><path d="M5.6 7 V24.6" stroke-dasharray="2.2 1.6"/><path d="M9.4 8.4 H24.4 M9.4 14.2 H24.4 M9.4 20 H24.4 M9.4 25 H24.4" stroke-width="1.4"/>
</svg>
<!-- ===== TAB ICONS ===== -->
<svg class="abs" style="left:108px;top:866px" width="26" height="26" viewBox="0 0 26 26" fill="none" stroke="#444" stroke-width="1.2" stroke-linejoin="round">
 <path d="M13 4.6 L16 2.4 H20.6 Q22.6 2.4 22.6 4.4 V21.4 L20 23.8 H13Z" fill="#fff"/><path d="M13 4.6 H20 V23.8 M20 4.6 L22.4 2.8"/>
 <path d="M2.6 10.4 L5.4 8 H9.6 Q11.4 8 11.4 9.8 V21.6 L9 23.8 H2.6Z" fill="#fff"/><path d="M2.6 10.4 H9 V23.8 M9 10.4 L11.2 8.4"/>
</svg>
<svg class="abs" style="left:362px;top:867px" width="24" height="24" viewBox="0 0 24 24"><rect x="1.4" y="1.6" width="21" height="20.6" rx="2.6" fill="#fff" stroke="#2d2d2d" stroke-width="1.5"/><path d="M4.6 18.4 L9.6 10.6 L12.6 14.6 L15 12.4 L19.4 18.4Z" fill="#2d2d2d"/><circle cx="16.6" cy="7.4" r="1.9" fill="#2d2d2d"/></svg>
<svg class="abs" style="left:616px;top:866px" width="26" height="26" viewBox="0 0 26 26" fill="none" stroke="#444" stroke-width="1.1" stroke-linejoin="round">
 <path d="M2 4.4 Q2 2.2 4.2 2.2 H17.6 L22.8 6.6 V21.6 Q22.8 23.6 20.8 23.6 H7 L2 19.6Z" fill="#fff"/><path d="M2 4 L7 8 H22.8 M7 8 V23.6"/><path d="M7.4 6 H18 V17.6 H7.4Z" fill="#8e8e8e" stroke="#666" stroke-width="0.9"/><path d="M4.4 3.8 L7.4 6 M4.4 3.8 V15.4 L7.4 17.6" stroke="#666" stroke-width="0.9"/>
</svg>
<!-- ===== VIEW CUBE ===== -->
<svg class="abs" style="left:1395px;top:95px" width="205" height="210" viewBox="1395 95 205 210">
 <g fill="#e6ecf3" opacity="0.9">
  <path d="M1493.8 108 L1503 121 H1484.6Z"/><path d="M1493.8 297 L1503 284 H1484.6Z" opacity="0.6"/>
  <path d="M1400 203 L1412 194 V212Z"/><path d="M1587.6 203 L1575.6 194 V212Z"/>
 </g>
 <g fill="none" stroke="#e6ecf3" stroke-width="7" opacity="0.9">
  <path d="M1432 148 Q1446 128 1468 122"/><path d="M1520 122 Q1543 128 1553 143"/>
 </g>
 <g fill="#e6ecf3" opacity="0.9"><path d="M1424 139 L1440 142 L1428 156Z"/><path d="M1561 150 L1545 147 L1559 135Z"/></g>
 <!-- cube -->
 <path d="M1453 181 L1466 162 H1527 L1540 176 V226 L1510 240 H1454Z" fill="#e8edf4" opacity="0.95"/>
 <path d="M1467 165 Q1495 160.5 1524 164.5 Q1518 170 1510 173 Q1484 175 1462 172Z" fill="#fff"/>
 <rect x="1457" y="184" width="50" height="53" rx="12" fill="#fff"/>
 <path d="M1518 186 Q1528 178 1536 178 V226 Q1528 232 1518 236Z" fill="#fff"/>
 <ellipse cx="1451" cy="178" rx="4" ry="5.5" transform="rotate(35 1451 178)" fill="#fff"/>
 <ellipse cx="1513" cy="179" rx="5.5" ry="5" fill="#fff"/>
 <ellipse cx="1512" cy="240" rx="6" ry="3.4" transform="rotate(-20 1512 240)" fill="#fff"/>
 <text x="1464.6" y="215.4" font-family="'Liberation Sans',sans-serif" font-size="14.4" fill="#222" textLength="34.4" lengthAdjust="spacingAndGlyphs" stroke="#222" stroke-width="0.25">Front</text>
 <text transform="translate(1529 211) rotate(-72) scale(0.62 1)" font-family="'Liberation Sans',sans-serif" font-size="11" fill="#333" text-anchor="middle">Right</text>
 <text transform="translate(1492 169) scale(1.5 0.42)" font-family="'Liberation Sans',sans-serif" font-size="9" font-style="italic" fill="#444" text-anchor="middle">Top</text>
 <!-- axes -->
 <path d="M1446.6 247 L1443.2 176" stroke="#2a41c8" stroke-width="1.7" fill="none"/>
 <path d="M1446.6 247.4 L1516.6 248.4" stroke="#d2393c" stroke-width="1.5" fill="none"/>
 <path d="M1446.6 247 L1470 234" stroke="#5bbf5b" stroke-width="1.3" fill="none"/>
 <text x="1437.6" y="169.4" font-family="'Liberation Sans',sans-serif" font-size="15" font-weight="700" fill="#2a41c8">Z</text>
 <text x="1524.6" y="255" font-family="'Liberation Sans',sans-serif" font-size="14.5" font-weight="700" fill="#c9363a">X</text>
 <text x="1469.6" y="237" font-family="'Liberation Sans',sans-serif" font-size="13" fill="#8fd08f">Y</text>
 <!-- small cube -->
 <path d="M1540 279.4 L1552 274.6 L1561.4 278 V291 L1551 296.6 L1540 291.6Z" fill="#9a9a9a" stroke="#555" stroke-width="0.9"/>
 <path d="M1540 279.4 L1552 274.6 L1561.4 278 L1551 283Z" fill="#e6e6e6" stroke="#555" stroke-width="0.7"/>
 <path d="M1551 283 L1561.4 278 V291 L1551 296.6Z" fill="#fdfdfd" stroke="#555" stroke-width="0.7"/>
 <path d="M1572.6 283.4 H1581.4 L1577 288.6Z" fill="#222"/>
</svg>
<!-- ===== RIGHT STRIP ===== -->
<div class="abs" style="left:1567px;top:297px;width:34px;height:162px;background:#fff;border:1px solid #cfcfcf;box-shadow:0 0 2px rgba(0,0,0,.15)"></div>
<div class="abs" style="left:1567px;top:472px;width:34px;height:166px;background:#fff;border:1px solid #cfcfcf;box-shadow:0 0 2px rgba(0,0,0,.15)"></div>
<div class="abs" style="left:1568px;top:334.5px;width:32px;height:1px;background:#dcdcdc"></div>
<div class="abs" style="left:1568px;top:375px;width:32px;height:1px;background:#dcdcdc"></div>
<div class="abs" style="left:1568px;top:416px;width:32px;height:1px;background:#dcdcdc"></div>
<div class="abs" style="left:1568px;top:515px;width:32px;height:1px;background:#dcdcdc"></div>
<div class="abs" style="left:1568px;top:556.5px;width:32px;height:1px;background:#dcdcdc"></div>
<div class="abs" style="left:1568px;top:598.5px;width:32px;height:1px;background:#dcdcdc"></div>
<svg class="abs" style="left:1568px;top:298px" width="32" height="340" viewBox="1568 298 32 340">
 <!-- appearance circles -->
 <circle cx="1590" cy="310.6" r="6.6" fill="#8a8a8a" stroke="#555" stroke-width="0.8"/>
 <circle cx="1596" cy="319.6" r="6.4" fill="#fff" stroke="#444" stroke-width="1"/>
 <circle cx="1584.4" cy="318.6" r="6.8" fill="#2a4fa8" stroke="#1d3a85" stroke-width="0.8"/>
 <!-- config cube -->
 <g fill="none" stroke="#333" stroke-width="1.2" stroke-linejoin="round">
  <path d="M1583.6 353.4 L1592 349.4 L1600 352.4 V362 L1592 366.4 L1583.6 362.6Z M1583.6 353.4 L1592 356.4 L1600 352.4 M1592 356.4 V366.4"/>
  <path d="M1583.6 394.4 L1592 390.4 L1598 393 V402.6 L1591 406.4 L1583.6 403Z M1583.6 394.4 L1591 397 L1598 393 M1591 397 V406.4" stroke="#555"/>
  <path d="M1581 392 q-2 0 -2 3 t-2 4 q2 1 2 4 t2 3.4" stroke="#555"/><path d="M1599.6 392 q1.4 0 1.4 3" stroke="#555"/>
 </g>
 <g stroke="#3157c0" stroke-width="1"><path d="M1576.6 345.4 h10.4 M1576.6 348.4 h10.4 M1576.6 351.4 h10.4 M1576.6 342.4 h10.4 M1576.6 342.4 v9 M1579.8 342.4 v9 M1583.2 342.4 v9 M1587 342.4 v9"/></g>
 <g stroke="#444" stroke-width="1"><path d="M1576.6 385.4 h10.4 M1576.6 388.4 h10.4 M1576.6 391.4 h10.4 M1576.6 382.4 h10.4 M1576.6 382.4 v9 M1579.8 382.4 v9 M1583.2 382.4 v9 M1587 382.4 v9"/>
  <path d="M1576.6 425.4 h10.4 M1576.6 428.4 h10.4 M1576.6 431.4 h10.4 M1576.6 422.4 h10.4 M1576.6 422.4 v9 M1579.8 422.4 v9 M1583.2 422.4 v9 M1587 422.4 v9"/></g>
 <text x="1583" y="446" font-family="'Liberation Serif',serif" font-size="19" font-style="italic" font-weight="700" fill="#222">x</text>
 <path d="M1580.6 432 q-4 7 0 15.6 M1598.6 432 q2 4 1.4 8" fill="none" stroke="#222" stroke-width="1.7"/>
 <!-- cube on gray -->
 <rect x="1573.6" y="479.4" width="30" height="29.6" rx="5" fill="#d4d4d4"/>
 <path d="M1578 487.6 L1588.6 482.6 L1599.4 487 V499.6 L1588.6 506 L1578 500.4Z M1578 487.6 L1588.6 492.6 L1599.4 487 M1588.6 492.6 V506" fill="none" stroke="#111" stroke-width="1.8" stroke-linejoin="round"/>
 <rect x="1573.6" y="521" width="30" height="30" rx="5" fill="#d8d8d8"/>
 <path d="M1578.6 524.6 L1598 548.4 M1598 524.6 L1578.6 548.4" stroke="#2a55d0" stroke-width="5.4" fill="none"/>
 <path d="M1578.6 524.6 L1598 548.4 M1598 524.6 L1578.6 548.4" stroke="#7fa2f2" stroke-width="1.4" fill="none"/>
 <rect x="1577" y="565" width="26" height="22.4" fill="#2f6be0" stroke="#1a1a2a" stroke-width="1.6"/>
 <text x="1579.4" y="583.4" font-family="'Liberation Serif',serif" font-size="18" fill="#e8eefc">MI</text>
 <rect x="1573.6" y="603.4" width="30" height="30" rx="6" fill="#d0d0d0"/>
 <circle cx="1588.6" cy="618.4" r="10.4" fill="#2d7fd6"/>
 <path d="M1588.6 610.6 L1595.4 614.5 V622.3 L1588.6 626.2 L1581.8 622.3 V614.5Z" fill="#6bc04a"/>
 <path d="M1588.6 614.6 L1591.9 616.5 V620.3 L1588.6 622.2 L1585.3 620.3 V616.5Z" fill="#4a5a66"/>
</svg>
<!-- window corners -->
<div class="abs" id="corner-bl" style="left:0;top:887.5px;width:12px;height:12px;background:radial-gradient(circle at 100% 0,rgba(43,43,43,0) 11.2px,#2b2b2b 12px)"></div>
<div class="abs" style="left:1590px;top:888.5px;width:10px;height:10px;background:radial-gradient(circle at 0 0,rgba(43,43,43,0) 9.2px,#2b2b2b 10px)"></div>
<div class="abs" style="left:46px;top:861.5px;width:259px;height:1px;background:#cfcfcf"></div>
</div>
</body>
</html>
